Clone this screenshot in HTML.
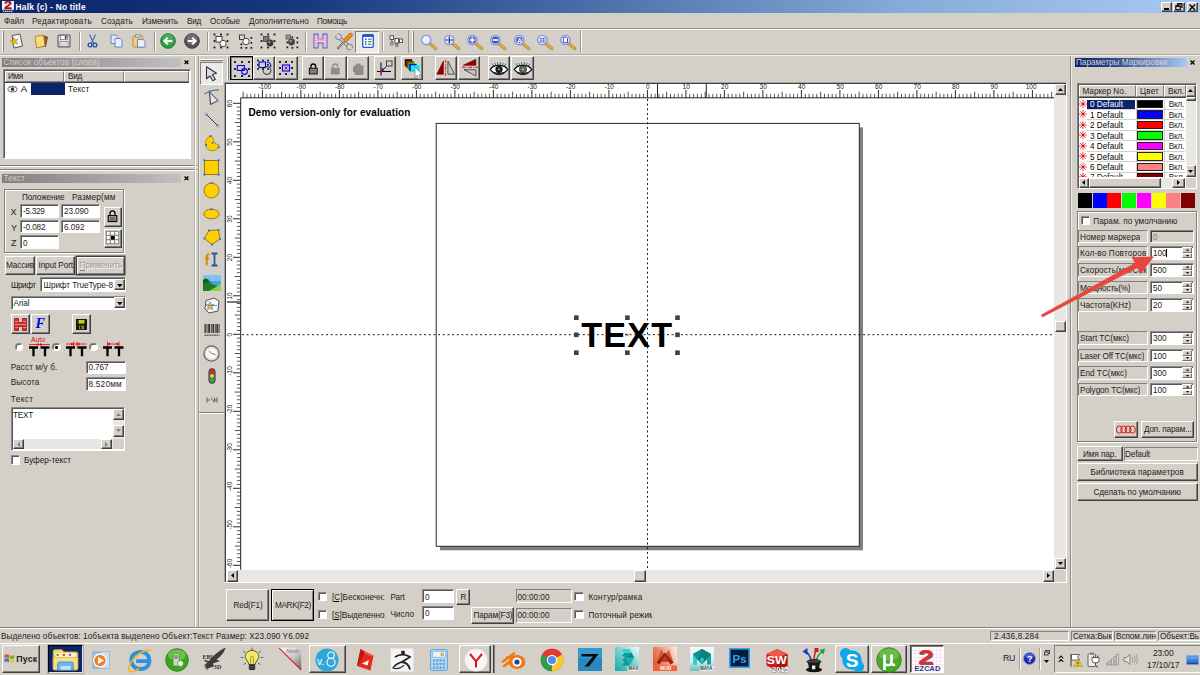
<!DOCTYPE html>
<html><head><meta charset="utf-8"><title>Halk (c) - No title</title>
<style>
*{box-sizing:border-box;margin:0;padding:0}
html,body{width:1200px;height:675px;overflow:hidden;background:#d4d0c8}
body{position:relative;font-family:"Liberation Sans","DejaVu Sans",sans-serif;font-size:8.2px;color:#1c1c1c;line-height:1}
.a{position:absolute}
.t{position:absolute;white-space:nowrap;line-height:1}
.btn{position:absolute;background:#d4d0c8;border:1px solid;border-color:#fff #404040 #404040 #fff;box-shadow:inset -1px -1px 0 #808080}
.btnp{position:absolute;background:#d4d0c8;border:1px solid #000;box-shadow:inset 1px 1px 0 #fff, inset -1px -1px 0 #808080}
.sunk{position:absolute;background:#fff;border:1px solid;border-color:#8a8a8a #fff #fff #8a8a8a;box-shadow:inset 1px 1px 0 #585858}
.sunkg{position:absolute;background:#d4d0c8;border:1px solid;border-color:#808080 #fff #fff #808080}
.hl{position:absolute;height:2px;border-top:1px solid #808080;border-bottom:1px solid #fff}
.vl{position:absolute;width:2px;border-left:1px solid #808080;border-right:1px solid #fff}
.chk{position:absolute;background:#fff;border:1px solid;border-color:#8a8a8a #fff #fff #8a8a8a;box-shadow:inset 1px 1px 0 #585858}
.grp{position:absolute;border:1px solid #808080;box-shadow:1px 1px 0 #fff, inset 1px 1px 0 #fff}
.dither{background-color:#e9e7e3}
.tbtn{position:absolute;background:#d4d0c8;border:1px solid;border-color:#fff #404040 #404040 #fff;box-shadow:inset -1px -1px 0 #808080}
svg{position:absolute;overflow:visible}
</style></head><body>

<div class="a" style="left:0;top:0;width:1200px;height:13px;background:linear-gradient(90deg,#0a246a 0%,#17387e 25%,#4d70ab 50%,#86abd8 75%,#a6caf0 100%)"></div>
<svg style="left:1.5px;top:0.5px" width="12" height="12" viewBox="0 0 12 12"><rect width="12" height="12" fill="#f4f4f4"/><text x="2" y="8.3" font-size="10" font-weight="bold" fill="#c81428" stroke="#7a0a14" stroke-width=".3" font-family="Liberation Sans,sans-serif" textLength="8" lengthAdjust="spacingAndGlyphs">2</text><rect x="0" y="8.8" width="12" height="3.2" fill="#2a2f6a"/><path d="M1 10.4H11" stroke="#c8c8e0" stroke-width="1.2" stroke-dasharray="1.4 .6"/></svg>
<div class="t" style="left:15.5px;top:2px;font-size:8.4px;line-height:10px;letter-spacing:0.222px;color:#fff;font-weight:bold;">Halk (c) - No title</div>
<div class="btn" style="left:1161.0px;top:1.7px;width:11.0px;height:10.0px;"></div>
<div class="btn" style="left:1173.0px;top:1.7px;width:11.5px;height:10.0px;"></div>
<div class="btn" style="left:1186.7px;top:1.7px;width:11.3px;height:10.0px;"></div>
<div class="a" style="left:1164px;top:8px;width:5px;height:1.5px;background:#000"></div>
<svg style="left:1175px;top:3px" width="8" height="8" viewBox="0 0 8 8"><rect x="2.5" y="0.8" width="4.5" height="3.5" fill="none" stroke="#000" stroke-width="1"/><rect x="2.5" y="0.3" width="4.5" height="1.2" fill="#000"/><rect x="0.8" y="3" width="4.5" height="3.7" fill="#d4d0c8" stroke="#000" stroke-width="1"/><rect x="0.8" y="2.6" width="4.5" height="1.2" fill="#000"/></svg>
<svg style="left:1189px;top:3.5px" width="7" height="7" viewBox="0 0 7 7"><path d="M0.5 0.5L6 6M6 0.5L0.5 6" stroke="#000" stroke-width="1.3"/></svg>
<div class="t" style="left:4.0px;top:17px;font-size:8.2px;line-height:9px;letter-spacing:-0.040px;">Файл</div>
<div class="t" style="left:32.0px;top:17px;font-size:8.2px;line-height:9px;letter-spacing:0.258px;">Редактировать</div>
<div class="t" style="left:101.0px;top:17px;font-size:8.2px;line-height:9px;letter-spacing:0.119px;">Создать</div>
<div class="t" style="left:142.0px;top:17px;font-size:8.2px;line-height:9px;letter-spacing:-0.124px;">Изменить</div>
<div class="t" style="left:187.0px;top:17px;font-size:8.2px;line-height:9px;letter-spacing:-0.278px;">Вид</div>
<div class="t" style="left:210.0px;top:17px;font-size:8.2px;line-height:9px;letter-spacing:-0.047px;">Особые</div>
<div class="t" style="left:249.0px;top:17px;font-size:8.2px;line-height:9px;letter-spacing:0.075px;">Дополнительно</div>
<div class="t" style="left:317.0px;top:17px;font-size:8.2px;line-height:9px;letter-spacing:-0.279px;">Помощь</div>
<div class="hl" style="left:0;top:27.8px;width:1200px;border-top-color:#9c9890"></div>
<div class="a" style="left:0;top:55.3px;width:1200px;height:1px;background:#f4f2ee"></div>
<div class="a" style="left:0;top:54.3px;width:1200px;height:1px;background:#b0aca4"></div>
<div class="a" style="left:2px;top:31px;width:2px;height:21px;border-left:1px solid #fff;border-right:1px solid #808080"></div>
<div class="a" style="left:412px;top:31px;width:2px;height:21px;border-left:1px solid #fff;border-right:1px solid #808080"></div>
<div class="a" style="left:408px;top:30px;width:1px;height:23px;background:#9a968e"></div>
<div class="a" style="left:580px;top:30px;width:1px;height:23px;background:#9a968e"></div>
<div class="a" style="left:581px;top:30px;width:1px;height:23px;background:#fff"></div>
<div class="vl" style="left:78.5px;top:32px;height:19px;border-left-color:#9a968e"></div>
<div class="vl" style="left:154px;top:32px;height:19px;border-left-color:#9a968e"></div>
<div class="vl" style="left:206.5px;top:32px;height:19px;border-left-color:#9a968e"></div>
<div class="vl" style="left:305px;top:32px;height:19px;border-left-color:#9a968e"></div>
<div class="vl" style="left:381.5px;top:32px;height:19px;border-left-color:#9a968e"></div>
<svg style="left:9.2px;top:33.3px" width="15" height="16" viewBox="0 0 15 16"><path d="M3 2.5L11 1L13.5 13L5 15Z" fill="#f4f4f4" stroke="#555" stroke-width="1"/><path d="M4.5 4.5l1.6 2.4 2.8-.6-1.8 2.2 1.4 2.5-2.7-1-2 2.1.2-2.9L1.4 8l2.8-.7z" fill="#f5c400" stroke="#a07000" stroke-width=".5"/></svg>
<svg style="left:32.8px;top:33.3px" width="16" height="16" viewBox="0 0 16 16"><path d="M9 2.5L14.5 4L12.5 13.5L7 13Z" fill="#a0522d" stroke="#5a2a10" stroke-width=".7"/><path d="M2 3.5L10.5 2L12 13L3.5 15Z" fill="#f7dc7a" stroke="#a88420" stroke-width=".9"/></svg>
<svg style="left:57.0px;top:34.3px" width="14" height="14" viewBox="0 0 14 14"><rect x="1" y="1" width="12" height="12" rx="1" fill="#e4e4e4" stroke="#555" stroke-width="1.1"/><rect x="3.5" y="1.5" width="7" height="4" fill="#fff" stroke="#666" stroke-width=".7"/><rect x="7.8" y="2" width="1.8" height="2.8" fill="#444"/><rect x="3" y="7.5" width="8" height="5" fill="#fafafa" stroke="#666" stroke-width=".7"/><path d="M4 9.3h6M4 11h6" stroke="#999" stroke-width=".6"/></svg>
<svg style="left:87.3px;top:34.3px" width="11" height="14" viewBox="0 0 11 14"><path d="M2.5 0.5L6.5 9M8.5 0.5L4.5 9" stroke="#3a6fc4" stroke-width="1.2" fill="none"/><circle cx="3" cy="11" r="1.9" fill="none" stroke="#1b4fb0" stroke-width="1.3"/><circle cx="8" cy="11" r="1.9" fill="none" stroke="#1b4fb0" stroke-width="1.3"/></svg>
<svg style="left:109.5px;top:34.3px" width="13" height="14" viewBox="0 0 13 14"><path d="M1 1H6L8 3V9.5H1Z" fill="#dfe9fb" stroke="#5b7fc7" stroke-width=".9"/><path d="M5 4.5H10L12 6.5V13H5Z" fill="#e8f0ff" stroke="#5b7fc7" stroke-width=".9"/></svg>
<svg style="left:132.3px;top:34.3px" width="14" height="14" viewBox="0 0 14 14"><rect x="1" y="2" width="10" height="11" rx="1" fill="#f3d27a" stroke="#b08a2a" stroke-width=".9"/><rect x="3.5" y="0.8" width="5" height="2.6" fill="#cfcfcf" stroke="#777" stroke-width=".6"/><path d="M5.5 5.5H11L13 7.5V13.2H5.5Z" fill="#e8f0ff" stroke="#5b7fc7" stroke-width=".9"/></svg>
<svg style="left:160.3px;top:33.3px" width="16" height="16" viewBox="0 0 16 16"><circle cx="8" cy="8" r="7.3" fill="#2f9e44" stroke="#1f6e30" stroke-width="1"/><circle cx="8" cy="6" r="5.5" fill="#5fc46f" opacity=".45"/><path d="M12.3 8H5M7.8 4.8L4.4 8l3.4 3.2" stroke="#fff" stroke-width="2" fill="none"/></svg>
<svg style="left:183.7px;top:33.3px" width="16" height="16" viewBox="0 0 16 16"><circle cx="8" cy="8" r="7.3" fill="#555" stroke="#333" stroke-width="1"/><circle cx="8" cy="6" r="5.5" fill="#999" opacity=".4"/><path d="M3.7 8H11M8.2 4.8L11.6 8 8.2 11.2" stroke="#fff" stroke-width="2" fill="none"/></svg>
<svg style="left:213.0px;top:33.3px" width="16" height="16" viewBox="-0.5 -0.5 16 16"><rect x="0.09999999999999998" y="0.09999999999999998" width="1.8" height="1.8" fill="#111"/><rect x="0.09999999999999998" y="6.6" width="1.8" height="1.8" fill="#111"/><rect x="0.09999999999999998" y="13.1" width="1.8" height="1.8" fill="#111"/><rect x="6.6" y="0.09999999999999998" width="1.8" height="1.8" fill="#111"/><rect x="6.6" y="13.1" width="1.8" height="1.8" fill="#111"/><rect x="13.1" y="0.09999999999999998" width="1.8" height="1.8" fill="#111"/><rect x="13.1" y="6.6" width="1.8" height="1.8" fill="#111"/><rect x="13.1" y="13.1" width="1.8" height="1.8" fill="#111"/><rect x="2.5" y="3" width="6" height="5.5" fill="#fff" stroke="#333" stroke-width=".9"/><circle cx="9.5" cy="10" r="3.2" fill="#fff" stroke="#333" stroke-width=".9"/></svg>
<svg style="left:236.5px;top:33.3px" width="16" height="16" viewBox="-0.5 -0.5 16 16"><rect x="2" y="1.5" width="5" height="4.5" fill="#d8d8d8" stroke="#333" stroke-width=".9"/><circle cx="8.5" cy="8" r="3.2" fill="#fff" stroke="#333" stroke-width=".9"/><rect x="3" y="10" width="1.7" height="1.7" fill="#111"/><rect x="3" y="13.5" width="1.7" height="1.7" fill="#111"/><rect x="8" y="13.5" width="1.7" height="1.7" fill="#111"/><rect x="13" y="13.5" width="1.7" height="1.7" fill="#111"/><rect x="13" y="8.5" width="1.7" height="1.7" fill="#111"/><rect x="13" y="3.5" width="1.7" height="1.7" fill="#111"/></svg>
<svg style="left:259.5px;top:33.3px" width="16" height="16" viewBox="-0.5 -0.5 16 16"><rect x="0.09999999999999998" y="0.09999999999999998" width="1.8" height="1.8" fill="#111"/><rect x="0.09999999999999998" y="6.6" width="1.8" height="1.8" fill="#111"/><rect x="0.09999999999999998" y="13.1" width="1.8" height="1.8" fill="#111"/><rect x="6.6" y="0.09999999999999998" width="1.8" height="1.8" fill="#111"/><rect x="6.6" y="13.1" width="1.8" height="1.8" fill="#111"/><rect x="13.1" y="0.09999999999999998" width="1.8" height="1.8" fill="#111"/><rect x="13.1" y="6.6" width="1.8" height="1.8" fill="#111"/><rect x="13.1" y="13.1" width="1.8" height="1.8" fill="#111"/><rect x="3" y="3" width="5.5" height="5" fill="#777" stroke="#333" stroke-width=".7"/><circle cx="9.5" cy="9.5" r="3.4" fill="#3a3a3a"/><circle cx="8.7" cy="8.6" r="1.3" fill="#888"/></svg>
<svg style="left:283.0px;top:33.3px" width="16" height="16" viewBox="-0.5 -0.5 16 16"><rect x="2.5" y="1.5" width="4.5" height="4" fill="#999" stroke="#444" stroke-width=".7"/><circle cx="8" cy="8.5" r="3.4" fill="#444"/><circle cx="7.2" cy="7.6" r="1.3" fill="#999"/><rect x="3" y="8" width="1.7" height="1.7" fill="#111"/><rect x="3" y="13" width="1.7" height="1.7" fill="#111"/><rect x="8" y="13.5" width="1.7" height="1.7" fill="#111"/><rect x="13" y="13" width="1.7" height="1.7" fill="#111"/><rect x="13" y="8" width="1.7" height="1.7" fill="#111"/><rect x="13" y="3.5" width="1.7" height="1.7" fill="#111"/><rect x="8" y="3" width="1.7" height="1.7" fill="#111"/></svg>
<svg style="left:312.8px;top:33.3px" width="15" height="16" viewBox="0 0 15 16"><path d="M1 1H5V6H10V1H14V15H10V10H5V15H1Z" fill="#f7a8c0" stroke="#5a5ad8" stroke-width="1.1"/><path d="M1 3.5H5M1 6H14M1 8.5H14M1 11H5M1 13.3H5M10 3.5H14M10 11H14M10 13.3H14" stroke="#fff" stroke-width=".7" opacity=".7"/></svg>
<svg style="left:334.9px;top:32.5px" width="18" height="17" viewBox="0 0 18 17"><path d="M4 4.2L14.3 13.8" stroke="#5a5a5a" stroke-width="3.4"/><path d="M4 4.2L14.3 13.8" stroke="#d6d6d6" stroke-width="2.2"/><circle cx="3.6" cy="3.8" r="2.9" fill="#d6d6d6" stroke="#5a5a5a" stroke-width=".7"/><path d="M3.2 3.4L0 2.2L2 0Z" fill="#d4d0c8"/><circle cx="14.6" cy="14" r="2.9" fill="#d6d6d6" stroke="#5a5a5a" stroke-width=".7"/><path d="M15 14.4L18 15.8L16.2 17.6Z" fill="#d4d0c8"/><path d="M10.2 7.6L3 15.3" stroke="#5a5a5a" stroke-width="2.1" stroke-linecap="round"/><path d="M10.2 7.6L3 15.3" stroke="#c8c8c8" stroke-width="1" stroke-linecap="round"/><path d="M15.6 2L10.8 7" stroke="#b85a08" stroke-width="4.2" stroke-linecap="round"/><path d="M15.6 2L10.8 7" stroke="#f58a1e" stroke-width="3.1" stroke-linecap="round"/></svg>
<div class="a" style="left:355.0px;top:31.0px;width:24.0px;height:21.6px;background:#eceae6;border:1px solid;border-color:#808080 #fff #fff #808080"></div>
<svg style="left:361.5px;top:34.3px" width="12" height="14" viewBox="0 0 12 14"><rect x="0.7" y="0.7" width="10.6" height="12.6" rx="1" fill="#fff" stroke="#1c5fd0" stroke-width="1.3"/><rect x="0.7" y="0.7" width="10.6" height="2.3" fill="#1c5fd0"/><path d="M3 5.2h1.5M3 7.7h1.5M3 10.2h1.5" stroke="#1c5fd0" stroke-width="1.4"/><path d="M6 5.2h3.5M6 7.7h3.5M6 10.2h3.5" stroke="#555" stroke-width="1"/></svg>
<svg style="left:389.0px;top:35.3px" width="14" height="12" viewBox="0 0 14 12"><rect x="1" y="0.8" width="3.6" height="3.6" fill="#fff" stroke="#333" stroke-width=".8"/><rect x="6" y="3.5" width="3.4" height="4.5" fill="#fff" stroke="#333" stroke-width=".8"/><rect x="10.5" y="4" width="3" height="3.6" fill="#fff" stroke="#333" stroke-width=".8"/><circle cx="2.8" cy="8.6" r="1.5" fill="#ccc" stroke="#333" stroke-width=".7"/><circle cx="7.8" cy="10.3" r="1.3" fill="#ccc" stroke="#333" stroke-width=".7"/><path d="M2.8 4.4V7M7.8 8V9" stroke="#333" stroke-width=".7"/></svg>
<svg style="left:419.5px;top:34.0px" width="18" height="16" viewBox="0 0 18 16"><path d="M9.5 9.3L15.8 14.6" stroke="#9a7424" stroke-width="3" stroke-linecap="round"/><path d="M9.5 9.3L15.8 14.6" stroke="#e2ac42" stroke-width="2.1" stroke-linecap="round"/><circle cx="6.3" cy="6" r="4.7" fill="#dce8fb" stroke="#7d86d8" stroke-width="1.1"/><circle cx="5.5" cy="5" r="2.5" fill="#fff" opacity=".6"/></svg>
<svg style="left:443.0px;top:34.0px" width="18" height="16" viewBox="0 0 18 16"><path d="M9.5 9.3L15.8 14.6" stroke="#9a7424" stroke-width="3" stroke-linecap="round"/><path d="M9.5 9.3L15.8 14.6" stroke="#e2ac42" stroke-width="2.1" stroke-linecap="round"/><circle cx="6.3" cy="6" r="4.7" fill="#dce8fb" stroke="#7d86d8" stroke-width="1.1"/><circle cx="5.5" cy="5" r="2.5" fill="#fff" opacity=".6"/><path d="M6.3 3v6M3.3 6h6" stroke="#2a3a9a" stroke-width="1.2"/><path d="M6.3 2l1 1.4h-2zM6.3 10l1-1.4h-2zM2.3 6l1.4-1v2zM10.3 6l-1.4-1v2z" fill="#2a3a9a"/></svg>
<svg style="left:466.3px;top:34.0px" width="18" height="16" viewBox="0 0 18 16"><path d="M9.5 9.3L15.8 14.6" stroke="#9a7424" stroke-width="3" stroke-linecap="round"/><path d="M9.5 9.3L15.8 14.6" stroke="#e2ac42" stroke-width="2.1" stroke-linecap="round"/><circle cx="6.3" cy="6" r="4.7" fill="#dce8fb" stroke="#7d86d8" stroke-width="1.1"/><circle cx="5.5" cy="5" r="2.5" fill="#fff" opacity=".6"/><circle cx="6.3" cy="6" r="3.5" fill="#3b55c8"/><path d="M6.3 3.4v5.2M3.7 6h5.2" stroke="#fff" stroke-width="1.7"/></svg>
<svg style="left:489.3px;top:34.0px" width="18" height="16" viewBox="0 0 18 16"><path d="M9.5 9.3L15.8 14.6" stroke="#9a7424" stroke-width="3" stroke-linecap="round"/><path d="M9.5 9.3L15.8 14.6" stroke="#e2ac42" stroke-width="2.1" stroke-linecap="round"/><circle cx="6.3" cy="6" r="4.7" fill="#dce8fb" stroke="#7d86d8" stroke-width="1.1"/><circle cx="5.5" cy="5" r="2.5" fill="#fff" opacity=".6"/><circle cx="6.3" cy="6" r="3.5" fill="#3b55c8"/><path d="M3.7 6h5.2" stroke="#fff" stroke-width="1.7"/></svg>
<svg style="left:512.5px;top:34.0px" width="18" height="16" viewBox="0 0 18 16"><path d="M9.5 9.3L15.8 14.6" stroke="#9a7424" stroke-width="3" stroke-linecap="round"/><path d="M9.5 9.3L15.8 14.6" stroke="#e2ac42" stroke-width="2.1" stroke-linecap="round"/><circle cx="6.3" cy="6" r="4.7" fill="#dce8fb" stroke="#7d86d8" stroke-width="1.1"/><circle cx="5.5" cy="5" r="2.5" fill="#fff" opacity=".6"/><circle cx="6.3" cy="6" r="3.2" fill="#3b55c8"/><text x="3.9" y="8.5" font-size="7" font-weight="bold" fill="#fff" font-family="Liberation Sans,sans-serif">A</text></svg>
<svg style="left:535.7px;top:34.0px" width="18" height="16" viewBox="0 0 18 16"><path d="M9.5 9.3L15.8 14.6" stroke="#9a7424" stroke-width="3" stroke-linecap="round"/><path d="M9.5 9.3L15.8 14.6" stroke="#e2ac42" stroke-width="2.1" stroke-linecap="round"/><circle cx="6.3" cy="6" r="4.7" fill="#dce8fb" stroke="#7d86d8" stroke-width="1.1"/><circle cx="5.5" cy="5" r="2.5" fill="#fff" opacity=".6"/><path d="M3.3 4.5h6M3.3 6.2h6M3.3 7.9h6M5 3.3v5.5M7.6 3.3v5.5" stroke="#4a5ab8" stroke-width=".6"/></svg>
<svg style="left:558.7px;top:34.0px" width="18" height="16" viewBox="0 0 18 16"><path d="M9.5 9.3L15.8 14.6" stroke="#9a7424" stroke-width="3" stroke-linecap="round"/><path d="M9.5 9.3L15.8 14.6" stroke="#e2ac42" stroke-width="2.1" stroke-linecap="round"/><circle cx="6.3" cy="6" r="4.7" fill="#dce8fb" stroke="#7d86d8" stroke-width="1.1"/><circle cx="5.5" cy="5" r="2.5" fill="#fff" opacity=".6"/><path d="M4.3 3.2h3l1.2 1.2v4.3h-4.2z" fill="#fff" stroke="#2a3a9a" stroke-width=".9"/></svg>
<div class="a" style="left:2px;top:57.5px;width:179px;height:9.5px;background:linear-gradient(90deg,#808080,#c0c0c0)"></div>
<div class="t" style="left:3.5px;top:58px;font-size:8.2px;line-height:9px;letter-spacing:0.079px;color:#d4d0c8;">Список объектов (слоёв)</div>
<svg style="left:184.3px;top:59.8px" width="5" height="4.6" viewBox="0 0 5 4.6"><path d="M0.6 0.5L4.4 4.1M4.4 0.5L0.6 4.1" stroke="#000" stroke-width="1.35"/></svg>
<div class="sunk" style="left:3.0px;top:69.0px;width:188.0px;height:90.0px;"></div>
<div class="a" style="left:5.0px;top:70.5px;width:59.0px;height:11.5px;background:#d4d0c8;border:1px solid;border-color:#fff #808080 #808080 #fff;box-shadow:0 1px 0 #404040"></div>
<div class="a" style="left:64.0px;top:70.5px;width:60.0px;height:11.5px;background:#d4d0c8;border:1px solid;border-color:#fff #808080 #808080 #fff;box-shadow:0 1px 0 #404040"></div>
<div class="a" style="left:124.0px;top:70.5px;width:65.0px;height:11.5px;background:#d4d0c8;border:1px solid;border-color:#fff #808080 #808080 #fff;box-shadow:0 1px 0 #404040"></div>
<div class="t" style="left:8.0px;top:72px;font-size:8.2px;line-height:9px;letter-spacing:-0.324px;">Имя</div>
<div class="t" style="left:68.0px;top:72px;font-size:8.2px;line-height:9px;letter-spacing:-0.278px;">Вид</div>
<svg style="left:6.5px;top:85px" width="11" height="8" viewBox="0 0 11 8"><ellipse cx="5.5" cy="4.3" rx="4.6" ry="2.6" fill="#fff" stroke="#333" stroke-width="0.8"/><circle cx="5.5" cy="4.3" r="1.7" fill="#333"/><path d="M2 1.5L3 2.5M5.5 0.5V1.8M9 1.5L8 2.5" stroke="#333" stroke-width="0.6"/></svg>
<div class="t" style="left:20.8px;top:83px;font-size:9.6px;line-height:11px;color:#000;">A</div>
<div class="a" style="left:31.0px;top:82.5px;width:33.5px;height:12.0px;background:#0a246a"></div>
<div class="t" style="left:68.0px;top:85px;font-size:8.2px;line-height:9px;letter-spacing:0.171px;">Текст</div>
<div class="a" style="left:0;top:165px;width:197px;height:1px;background:#808080"></div>
<div class="a" style="left:0;top:166px;width:197px;height:1px;background:#fff"></div>
<div class="a" style="left:0;top:169px;width:197px;height:1px;background:#808080"></div>
<div class="a" style="left:0;top:170px;width:197px;height:1px;background:#fff"></div>
<div class="a" style="left:195px;top:56px;width:1px;height:571px;background:#fff"></div>
<div class="a" style="left:194px;top:56px;width:1px;height:571px;background:#bcb8b0"></div>
<div class="a" style="left:2px;top:173.5px;width:179px;height:9.5px;background:linear-gradient(90deg,#808080,#c0c0c0)"></div>
<div class="t" style="left:3.5px;top:174px;font-size:8.2px;line-height:9px;letter-spacing:0.171px;color:#d4d0c8;">Текст</div>
<svg style="left:184.3px;top:175.8px" width="5" height="4.6" viewBox="0 0 5 4.6"><path d="M0.6 0.5L4.4 4.1M4.4 0.5L0.6 4.1" stroke="#000" stroke-width="1.35"/></svg>
<div class="grp" style="left:4.3px;top:188.5px;width:119.7px;height:64.0px;"></div>
<div class="t" style="left:22.0px;top:193px;font-size:8.2px;line-height:9px;letter-spacing:-0.093px;">Положение</div>
<div class="t" style="left:72.0px;top:193px;font-size:8.2px;line-height:9px;letter-spacing:0.146px;">Размер(мм</div>
<div class="t" style="left:10.5px;top:207px;font-size:9px;line-height:10px;">X</div>
<div class="t" style="left:11.0px;top:223px;font-size:9px;line-height:10px;">Y</div>
<div class="t" style="left:11.0px;top:238px;font-size:9px;line-height:10px;">Z</div>
<div class="sunk" style="left:20.0px;top:204.0px;width:39.0px;height:13.5px;"></div>
<div class="t" style="left:23.0px;top:207px;font-size:8.2px;line-height:9px;letter-spacing:-0.292px;">-5.329</div>
<div class="sunk" style="left:61.0px;top:204.0px;width:39.0px;height:13.5px;"></div>
<div class="t" style="left:64.0px;top:207px;font-size:8.2px;line-height:9px;letter-spacing:-0.097px;">23.090</div>
<div class="sunk" style="left:20.0px;top:219.5px;width:39.0px;height:13.5px;"></div>
<div class="t" style="left:23.0px;top:223px;font-size:8.2px;line-height:9px;letter-spacing:-0.125px;">-0.082</div>
<div class="sunk" style="left:61.0px;top:219.5px;width:39.0px;height:13.5px;"></div>
<div class="t" style="left:64.0px;top:223px;font-size:8.2px;line-height:9px;letter-spacing:-0.004px;">6.092</div>
<div class="sunk" style="left:20.0px;top:235.3px;width:39.0px;height:13.7px;"></div>
<div class="t" style="left:23.0px;top:239px;font-size:8.2px;line-height:9px;">0</div>
<div class="btn" style="left:104.0px;top:207.0px;width:17.5px;height:19.5px;"></div>
<svg style="left:106.8px;top:209.5px" width="11" height="13" viewBox="0 0 11 13"><path d="M3 6V3.3a2.5 2.5 0 0 1 5 0V6" fill="none" stroke="#000" stroke-width="1.3"/><rect x="1.2" y="5.6" width="8.6" height="6" fill="#b0b0b0" stroke="#000" stroke-width="1.1"/><path d="M2.5 8h6M2.5 10h6" stroke="#000" stroke-width="0.7"/></svg>
<div class="btn" style="left:104.0px;top:229.0px;width:17.5px;height:18.5px;"></div>
<svg style="left:106px;top:231px" width="13" height="13" viewBox="0 0 13 13"><rect x="0" y="0" width="13" height="13" fill="#fff"/><path d="M4.3 0V13M8.6 0V13M0 4.3H13M0 8.6H13" stroke="#909090" stroke-width="1.2"/><rect x="0.3" y="0.3" width="12.4" height="12.4" fill="none" stroke="#808080" stroke-width="1"/><rect x="5" y="5" width="3.6" height="3.6" fill="#000"/></svg>
<div class="btn" style="left:4.5px;top:256.0px;width:30.0px;height:18.5px;"></div>
<div class="t" style="left:6.0px;top:261px;font-size:8.2px;line-height:9px;letter-spacing:-0.103px;overflow:hidden;width:28px;">Массив</div>
<div class="btn" style="left:36.0px;top:256.0px;width:39.0px;height:18.5px;"></div>
<div class="t" style="left:38.5px;top:261px;font-size:8.2px;line-height:9px;letter-spacing:-0.106px;">Input Port</div>
<div class="btnp" style="left:75.8px;top:256.0px;width:49.2px;height:18.8px;border:1px solid #404040;box-shadow:inset 1px 1px 0 #fff, inset -1px -1px 0 #808080, 0 0 0 0.5px #404040"></div>
<div class="t" style="left:79.5px;top:261px;font-size:8.2px;line-height:9px;letter-spacing:0.070px;color:#9a968e;text-shadow:0.6px 0.6px 0 #fff;">Применить</div>
<div class="a" style="left:80px;top:270px;width:5px;height:0.7px;background:#808080"></div>
<div class="t" style="left:11.0px;top:281px;font-size:8.2px;line-height:9px;letter-spacing:-0.496px;">Шрифт</div>
<div class="sunk" style="left:40.0px;top:277.4px;width:85.9px;height:14.2px;"></div>
<div class="t" style="left:43.5px;top:281px;font-size:8.2px;line-height:9px;letter-spacing:-0.086px;overflow:hidden;width:70px;">Шрифт TrueType-8</div>
<div class="btn" style="left:114.2px;top:279.2px;width:10.6px;height:10.7px;"><svg style="left:2.3px;top:3.6px" width="5.6" height="3.2" viewBox="0 0 5.6 3.2"><path d="M0 0H5.6L2.8 3.2Z" fill="#000"/></svg></div>
<div class="sunk" style="left:10.6px;top:295.6px;width:115.3px;height:14.0px;"></div>
<div class="t" style="left:13.5px;top:299px;font-size:8.2px;line-height:9px;letter-spacing:-0.081px;">Arial</div>
<div class="btn" style="left:114.2px;top:297.4px;width:10.6px;height:10.6px;"><svg style="left:2.3px;top:3.6px" width="5.6" height="3.2" viewBox="0 0 5.6 3.2"><path d="M0 0H5.6L2.8 3.2Z" fill="#000"/></svg></div>
<div class="btn" style="left:10.5px;top:313.5px;width:19.0px;height:20.5px;"></div>
<svg style="left:13.5px;top:317.5px" width="13" height="13" viewBox="0 0 13 13"><path d="M0.5 0.5H4.5V4.5H8.5V0.5H12.5V12.5H8.5V8.5H4.5V12.5H0.5Z" fill="#e03030" stroke="#801010" stroke-width="0.8"/><path d="M0.5 3.5H4.5M0.5 6.5H12.5M0.5 9.5H4.5M8.5 3.5H12.5M8.5 9.5H12.5" stroke="#fff" stroke-width="0.6" opacity=".6"/></svg>
<div class="btn" style="left:30.8px;top:313.5px;width:19.0px;height:20.5px;"></div>
<div class="t" style="left:35.5px;top:316px;font-size:14px;line-height:16px;color:#0000e0;font-weight:bold;font-style:italic;font-family:'Liberation Serif',serif;">F</div>
<div class="btn" style="left:71.5px;top:313.5px;width:19.2px;height:20.5px;"></div>
<svg style="left:75.5px;top:318.5px" width="11" height="11" viewBox="0 0 11 11"><rect x="0.5" y="0.5" width="10" height="10" fill="#1a1a00" stroke="#000" stroke-width="0.8"/><rect x="2.5" y="1" width="6" height="3.6" fill="#c8c832"/><rect x="3" y="6.6" width="5" height="3.6" fill="#8a8a20"/><rect x="4" y="7.3" width="1.6" height="2.4" fill="#111"/></svg>
<div class="a" style="left:15.0px;top:343.1px;width:8.4px;height:8.4px;border-radius:50%;background:#fff;border:1px solid;border-color:#808080 #fff #fff #808080;box-shadow:inset 0.7px 0.7px 0 #404040"></div>
<div class="a" style="left:52.3px;top:343.1px;width:8.4px;height:8.4px;border-radius:50%;background:#fff;border:1px solid;border-color:#808080 #fff #fff #808080;box-shadow:inset 0.7px 0.7px 0 #404040"></div>
<div class="a" style="left:55.2px;top:346.0px;width:2.6px;height:2.6px;border-radius:50%;background:#000"></div>
<div class="a" style="left:89.3px;top:343.1px;width:8.4px;height:8.4px;border-radius:50%;background:#fff;border:1px solid;border-color:#808080 #fff #fff #808080;box-shadow:inset 0.7px 0.7px 0 #404040"></div>
<svg style="left:27.8px;top:338px" width="23" height="19" viewBox="0 0 23 19"><path d="M1 9.5H10M5.5 9.5V18.2M12.5 9.5H21.5M17 9.5V18.2" stroke="#000" stroke-width="2.3" fill="none"/><path d="M1 6.5H22" stroke="#e00" stroke-width="0.8"/><path d="M8 6.5l2.5-1.5v3zM14.5 6.5l-2.5-1.5v3z" fill="#e00"/><text x="3" y="4.4" font-size="6.8" fill="#e00" font-family="Liberation Sans,sans-serif">Auto</text></svg>
<svg style="left:64.8px;top:338px" width="23" height="19" viewBox="0 0 23 19"><path d="M1 9.5H10M5.5 9.5V18.2M12.5 9.5H21.5M17 9.5V18.2" stroke="#000" stroke-width="2.3" fill="none"/><path d="M1 6H21.5" stroke="#e00" stroke-width="0.8"/><path d="M8.5 3.5V8.5M12 3.5V8.5" stroke="#e00" stroke-width="0.8"/><path d="M8.5 6l-2.5-1.5v3zM12 6l2.5-1.5v3z" fill="#e00"/></svg>
<svg style="left:102px;top:338px" width="23" height="19" viewBox="0 0 23 19"><path d="M1 9.5H10M5.5 9.5V18.2M12.5 9.5H21.5M17 9.5V18.2" stroke="#000" stroke-width="2.3" fill="none"/><path d="M5.5 6H17" stroke="#e00" stroke-width="0.8"/><path d="M5.5 3.5V8.5M17 3.5V8.5" stroke="#e00" stroke-width="0.8"/><path d="M5.5 6l2.5-1.5v3zM17 6l-2.5-1.5v3z" fill="#e00"/></svg>
<div class="t" style="left:10.7px;top:363px;font-size:8.2px;line-height:9px;letter-spacing:0.128px;">Расст м/у б.</div>
<div class="sunk" style="left:86.0px;top:360.7px;width:39.5px;height:13.5px;"></div>
<div class="t" style="left:88.5px;top:363px;font-size:8.2px;line-height:9px;letter-spacing:-0.104px;">0.767</div>
<div class="t" style="left:10.7px;top:378px;font-size:8.2px;line-height:9px;letter-spacing:0.107px;">Высота</div>
<div class="sunk" style="left:86.0px;top:377.0px;width:39.5px;height:14.0px;"></div>
<div class="t" style="left:88.5px;top:380px;font-size:8.2px;line-height:9px;letter-spacing:0.244px;">8.520мм</div>
<div class="t" style="left:10.7px;top:395px;font-size:8.2px;line-height:9px;letter-spacing:0.431px;">Текст</div>
<div class="sunk" style="left:10.7px;top:406.5px;width:114.3px;height:44.7px;"></div>
<div class="t" style="left:13.0px;top:411px;font-size:8.2px;line-height:9px;letter-spacing:-0.239px;">TEXT</div>
<div class="a dither" style="left:112.5px;top:408.5px;width:11px;height:30px"></div>
<div class="a dither" style="left:12.7px;top:438.7px;width:100px;height:10.8px"></div>
<div class="a" style="left:112.5px;top:438.7px;width:11px;height:10.8px;background:#d4d0c8"></div>
<div class="btn" style="left:112.5px;top:408.5px;width:11.0px;height:11.5px;"><svg style="left:2.0px;top:3.2px" width="5" height="3" viewBox="0 0 5 3"><path d="M0 3L2.5 0L5 3Z" fill="#808080"/></svg></div>
<div class="btn" style="left:112.5px;top:425.0px;width:11.0px;height:11.5px;"><svg style="left:2.0px;top:3.2px" width="5" height="3" viewBox="0 0 5 3"><path d="M0 0H5L2.5 3Z" fill="#808080"/></svg></div>
<div class="btn" style="left:12.7px;top:438.7px;width:11.0px;height:10.8px;"><svg style="left:3.0px;top:1.9px" width="3" height="5" viewBox="0 0 3 5"><path d="M3 0V5L0 2.5Z" fill="#808080"/></svg></div>
<div class="btn" style="left:100.5px;top:438.7px;width:11.5px;height:10.8px;"><svg style="left:3.2px;top:1.9px" width="3" height="5" viewBox="0 0 3 5"><path d="M0 0V5L3 2.5Z" fill="#808080"/></svg></div>
<div class="chk" style="left:10.7px;top:455.0px;width:9.3px;height:9.5px;"></div>
<div class="t" style="left:24.0px;top:456px;font-size:8.2px;line-height:9px;letter-spacing:-0.052px;">Буфер-текст</div>
<div class="a" style="left:197.8px;top:56px;width:1px;height:571px;background:#9c9890"></div>
<div class="a" style="left:198.8px;top:56px;width:1px;height:571px;background:#e8e6e0"></div>
<div class="a" style="left:200px;top:58.5px;width:23px;height:2px;border-top:1px solid #fff;border-bottom:1px solid #808080"></div>
<div class="a" style="left:199px;top:411.5px;width:26px;height:2px;border-top:1px solid #808080;border-bottom:1px solid #fff"></div>
<div class="a" style="left:200.2px;top:62.4px;width:23.1px;height:22.4px;background:#eceae6;border:1px solid;border-color:#808080 #fff #fff #808080"></div>
<svg style="left:205.3px;top:65.7px" width="13" height="16" viewBox="0 0 13 16"><path d="M1.5 0.8L11.5 7.2L7.4 8.6L10.3 13.3L7.8 14.8L5 10L1.5 12.8Z" fill="#d8dce8" stroke="#333" stroke-width="1.1" stroke-linejoin="round"/></svg>
<svg style="left:203.5px;top:88.5px" width="16" height="17" viewBox="0 0 16 17"><path d="M0.5 5C5 2 9 1 15 1" fill="none" stroke="#333" stroke-width=".8"/><path d="M5.5 3L14 11.5L6.5 15.5Z" fill="#dfe3ee" stroke="#333" stroke-width="1"/><rect x="4.4" y="1.6" width="2.4" height="2.4" fill="#3a7ae0"/></svg>
<svg style="left:204.5px;top:113.0px" width="14" height="14" viewBox="0 0 14 14"><path d="M1.5 1.5L12.5 12.5" stroke="#333" stroke-width="1"/><rect x="0.5" y="0.5" width="2" height="2" fill="#3a7ae0"/><rect x="11.5" y="11.5" width="2" height="2" fill="#3a7ae0"/></svg>
<svg style="left:203.5px;top:135.3px" width="16" height="17" viewBox="0 0 16 17"><path d="M6.3 0.8C2.5 3 0.3 8 2.3 12.2C4.5 16.8 12.5 17.2 15.3 11.5C15.5 10 13.5 9.5 12 8.8C10 7.8 9.8 5.5 9.2 3.5C8.8 2 7.5 0.5 6.3 0.8Z" fill="#ffd000" stroke="#a08000" stroke-width=".8"/><rect x="5.5" y="0.2" width="2" height="2" fill="#3a7ae0"/><rect x="13.6" y="11.2" width="2" height="2" fill="#3a7ae0"/><rect x="1" y="9" width="2" height="2" fill="#3a7ae0"/><rect x="7.8" y="7" width="1.8" height="1.8" fill="#3a7ae0"/></svg>
<svg style="left:203.0px;top:158.5px" width="17" height="17" viewBox="0 0 17 17"><rect x="1.5" y="1.5" width="14" height="14" fill="#ffd000" stroke="#907000" stroke-width=".9"/><rect x="0.3" y="0.3" width="2" height="2" fill="#3a7ae0"/><rect x="14.7" y="0.3" width="2" height="2" fill="#3a7ae0"/><rect x="0.3" y="14.7" width="2" height="2" fill="#3a7ae0"/><rect x="14.7" y="14.7" width="2" height="2" fill="#3a7ae0"/></svg>
<svg style="left:203.0px;top:181.8px" width="17" height="17" viewBox="0 0 17 17"><circle cx="8.5" cy="8.5" r="7.5" fill="#ffd000" stroke="#907000" stroke-width=".9"/><rect x="7.5" y="0" width="2" height="2" fill="#3a7ae0"/></svg>
<svg style="left:203.0px;top:207.7px" width="17" height="12" viewBox="0 0 17 12"><ellipse cx="8.5" cy="6" rx="7.7" ry="4.8" fill="#ffd000" stroke="#907000" stroke-width=".9"/><rect x="7.5" y="0.2" width="2" height="2" fill="#3a7ae0"/></svg>
<svg style="left:202.5px;top:228.5px" width="18" height="17" viewBox="0 0 18 17"><path d="M6 1.5L15.5 1L17 10L9 15.5L1.5 9.5Z" fill="#ffd000" stroke="#907000" stroke-width=".9"/><rect x="5" y="0.5" width="2" height="2" fill="#3a7ae0"/><rect x="14.5" y="0" width="2" height="2" fill="#3a7ae0"/><rect x="16" y="9" width="2" height="2" fill="#3a7ae0"/><rect x="8" y="14.5" width="2" height="2" fill="#3a7ae0"/><rect x="0.5" y="8.5" width="2" height="2" fill="#3a7ae0"/></svg>
<svg style="left:204.0px;top:252.2px" width="15" height="15" viewBox="0 0 15 15"><path d="M5.5 2.5C3.5 1.5 2.8 3 2.8 5V13.5M1 6.5H5" fill="none" stroke="#d09000" stroke-width="2"/><path d="M7.5 1.5H13.5M7.5 13.5H13.5M10.5 1.5V13.5" stroke="#1a6090" stroke-width="1.8"/></svg>
<svg style="left:202.5px;top:274.8px" width="18" height="16" viewBox="0 0 18 16"><rect x="0" y="0" width="18" height="16" fill="#4aa0e8"/><rect x="0" y="0" width="18" height="6" fill="#7cc4f4"/><path d="M0 16V7L5 4L9 9L18 12V16Z" fill="#1f7a2a"/><path d="M6 16L18 9V16Z" fill="#8ad04a"/><path d="M0 5L3 3L6 6L0 9Z" fill="#155a20"/></svg>
<svg style="left:203.5px;top:297.4px" width="16" height="17" viewBox="0 0 16 17"><path d="M2 3.5L10 1L15 4L14 14L5 16L1 12Z" fill="#f6f6f6" stroke="#444" stroke-width=".9"/><path d="M6 4.5l1.2 3 3.2.2-2.6 2 .9 3.2L6 11.2 3.3 12.9l.9-3.2-2.6-2 3.2-.2z" fill="#f5c400" stroke="#3a6ae0" stroke-width=".5"/><path d="M4 8.5H13" stroke="#3a6ae0" stroke-width=".7"/></svg>
<svg style="left:203.5px;top:323.5px" width="16" height="13" viewBox="0 0 16 13"><rect x="0.5" y="0" width="1.2" height="9" fill="#222"/><rect x="2.6" y="0" width="0.8" height="9" fill="#222"/><rect x="4.3" y="0" width="1.6" height="9" fill="#222"/><rect x="6.8" y="0" width="0.8" height="9" fill="#222"/><rect x="8.5" y="0" width="1.4" height="9" fill="#222"/><rect x="10.8" y="0" width="0.8" height="9" fill="#222"/><rect x="12.4" y="0" width="1.4" height="9" fill="#222"/><rect x="14.6" y="0" width="0.9" height="9" fill="#222"/><path d="M0.5 11.3H15.5" stroke="#555" stroke-width="1.6" stroke-dasharray="1.6 0.8"/></svg>
<svg style="left:203.0px;top:344.5px" width="17" height="17" viewBox="0 0 17 17"><circle cx="8.5" cy="8.5" r="7.6" fill="#e8e8e8" stroke="#666" stroke-width="1.3"/><circle cx="8.5" cy="8.5" r="5.8" fill="#fafafa" stroke="#bbb" stroke-width=".5"/><path d="M8.5 8.5L6 5.5M8.5 8.5L12.5 9.5" stroke="#a33" stroke-width=".8"/></svg>
<svg style="left:207.5px;top:368.0px" width="8" height="16" viewBox="0 0 8 16"><rect x="0.8" y="0.5" width="6.4" height="15" rx="3.2" fill="#5a5a5a" stroke="#333" stroke-width=".6"/><circle cx="4" cy="3.7" r="2.1" fill="#e02020"/><circle cx="4" cy="8" r="2.1" fill="#f0d020"/><circle cx="4" cy="12.3" r="2.1" fill="#30b030"/></svg>
<svg style="left:205.5px;top:396.8px" width="12" height="6" viewBox="0 0 12 6"><path d="M1 0.5V5.5M1 3H4M4.5 0.8L8.5 5.2M8.5 0.8V5.2M8.5 3H11M11 0.5V5.5" stroke="#555" stroke-width=".9" fill="none"/></svg>
<div class="a" style="left:226.5px;top:57px;width:2px;height:23px;border-left:1px solid #fff;border-right:1px solid #808080"></div>
<div class="a" style="left:230.3px;top:56.2px;width:22.5px;height:24.3px;background:#d4d0c8;border:1.3px solid #000;box-shadow:inset 1px 1px 0 #808080"></div>
<div class="btn" style="left:252.8px;top:56.2px;width:22.4px;height:24.3px;"></div>
<div class="btn" style="left:275.2px;top:56.2px;width:22.4px;height:24.3px;"></div>
<div class="btn" style="left:301.7px;top:56.2px;width:22.3px;height:24.3px;"></div>
<div class="btn" style="left:324.0px;top:56.2px;width:22.5px;height:24.3px;"></div>
<div class="btn" style="left:346.5px;top:56.2px;width:22.5px;height:24.3px;"></div>
<div class="btn" style="left:373.8px;top:56.2px;width:22.7px;height:24.3px;"></div>
<div class="btn" style="left:401.0px;top:56.2px;width:22.3px;height:24.3px;"></div>
<div class="btn" style="left:435.0px;top:56.2px;width:22.3px;height:24.3px;"></div>
<div class="btn" style="left:457.5px;top:56.2px;width:22.5px;height:24.3px;"></div>
<div class="btn" style="left:487.5px;top:56.2px;width:22.3px;height:24.3px;"></div>
<div class="btn" style="left:511.3px;top:56.2px;width:22.4px;height:24.3px;"></div>
<svg style="left:233.1px;top:59.8px" width="18" height="18" viewBox="0 0 18 18"><rect x="1.05" y="1.05" width="1.9" height="1.9" fill="#111"/><rect x="1.05" y="8.05" width="1.9" height="1.9" fill="#111"/><rect x="1.05" y="15.05" width="1.9" height="1.9" fill="#111"/><rect x="8.05" y="1.05" width="1.9" height="1.9" fill="#111"/><rect x="8.05" y="15.05" width="1.9" height="1.9" fill="#111"/><rect x="15.05" y="1.05" width="1.9" height="1.9" fill="#111"/><rect x="15.05" y="8.05" width="1.9" height="1.9" fill="#111"/><rect x="15.05" y="15.05" width="1.9" height="1.9" fill="#111"/><rect x="4.3" y="5.5" width="7" height="5" fill="none" stroke="#0000f0" stroke-width="1.1"/><circle cx="11.5" cy="11.5" r="2.9" fill="none" stroke="#0000f0" stroke-width="1.1"/></svg>
<svg style="left:255.0px;top:59.3px" width="18" height="18" viewBox="0 0 18 18"><rect x="2.15" y="0.65" width="1.7" height="1.7" fill="#111"/><rect x="2.15" y="4.90" width="1.7" height="1.7" fill="#111"/><rect x="2.15" y="9.15" width="1.7" height="1.7" fill="#111"/><rect x="7.15" y="0.65" width="1.7" height="1.7" fill="#111"/><rect x="7.15" y="9.15" width="1.7" height="1.7" fill="#111"/><rect x="12.15" y="0.65" width="1.7" height="1.7" fill="#111"/><rect x="12.15" y="4.90" width="1.7" height="1.7" fill="#111"/><rect x="12.15" y="9.15" width="1.7" height="1.7" fill="#111"/><rect x="4" y="3" width="6.5" height="5.5" fill="#d4d0c8" stroke="#0000f0" stroke-width="1.1"/><circle cx="12" cy="11.5" r="4" fill="none" stroke="#222" stroke-width=".9"/><path d="M12 3.5c2.5-.8 4 1 3.6 3.2" fill="none" stroke="#0000f0" stroke-width="1"/><path d="M14.5 7.5l1.5-1.6 .8 2.2z" fill="#0000f0"/></svg>
<svg style="left:277.4px;top:59.3px" width="18" height="18" viewBox="0 0 18 18"><rect x="2.05" y="2.05" width="1.9" height="1.9" fill="#111"/><rect x="2.05" y="8.05" width="1.9" height="1.9" fill="#111"/><rect x="2.05" y="14.05" width="1.9" height="1.9" fill="#111"/><rect x="8.05" y="2.05" width="1.9" height="1.9" fill="#111"/><rect x="8.05" y="14.05" width="1.9" height="1.9" fill="#111"/><rect x="14.05" y="2.05" width="1.9" height="1.9" fill="#111"/><rect x="14.05" y="8.05" width="1.9" height="1.9" fill="#111"/><rect x="14.05" y="14.05" width="1.9" height="1.9" fill="#111"/><rect x="5.5" y="6" width="7" height="6" fill="#c8c8ff" stroke="#0000f0" stroke-width="1.1"/><path d="M7.6 7.6l2.8 2.8M10.4 7.6l-2.8 2.8" stroke="#e00000" stroke-width="1"/></svg>
<svg style="left:307.6px;top:62.7px" width="10.5" height="12.3" viewBox="0 0 12 14"><path d="M3.3 6V3.8a2.7 2.7 0 0 1 5.4 0V6" fill="none" stroke="#000" stroke-width="1.5"/><rect x="1.5" y="6" width="9" height="6.5" fill="#a8a8a8" stroke="#000" stroke-width="1.1"/><path d="M2.5 8.2h7M2.5 10.3h7" stroke="#000" stroke-width=".6"/></svg>
<svg style="left:330.0px;top:62.7px" width="10.5" height="12.3" viewBox="0 0 12 14"><path d="M3.3 6V3.8a2.7 2.7 0 0 1 5.4 0V4.5" fill="none" stroke="#8c8c8c" stroke-width="1.5"/><rect x="1.5" y="6" width="9" height="6.5" fill="#8c8c8c" stroke="#8c8c8c" stroke-width="1.1"/></svg>
<svg style="left:350.8px;top:61.6px" width="14" height="14" viewBox="0 0 14 14"><path d="M2 5L6 1.5H9.5V3.5H12.5V13H3.5V10H2Z" fill="#8c8c8c"/></svg>
<svg style="left:376.1px;top:59.3px" width="18" height="18" viewBox="0 0 18 18"><path d="M1 12.5H15M5 3.5V16.5" stroke="#000" stroke-width="1"/><rect x="10.5" y="2" width="5.5" height="5" fill="#d4d0c8" stroke="#333" stroke-width=".9"/><path d="M10.5 7.5L6.5 11" stroke="#0000e0" stroke-width="1"/><path d="M5.6 11.8l3-.6-2.2-2.2z" fill="#0000e0"/><path d="M3.5 12.5H6.5M5 11V14" stroke="#c00000" stroke-width="1"/></svg>
<svg style="left:403.4px;top:58.3px" width="18" height="20" viewBox="0 0 18 20"><rect x="1.8" y="1.2" width="7.2" height="7.2" fill="#111"/><rect x="3.3" y="2.8" width="7.2" height="7.2" fill="#e00000"/><rect x="4.8" y="4.4" width="7.2" height="7.2" fill="#00c000"/><rect x="6.3" y="6" width="7.2" height="7.2" fill="#0000e0"/><rect x="7.8" y="7.2" width="8.8" height="6.6" fill="#00f0f0"/><path d="M12 8.7L19 16.5L16 16.8L17.6 20.6L15.8 21.3L14.2 17.6L12 19.6Z" fill="#fff" stroke="#666" stroke-width=".6"/></svg>
<svg style="left:437.1px;top:59.3px" width="18" height="18" viewBox="0 0 18 18"><path d="M6.4 2.1V15.2H-0.2Z" fill="#8b0000" stroke="#500" stroke-width=".6"/><path d="M10.9 2.1V15.2H17.5Z" fill="#c8c8c8" stroke="#333" stroke-width=".8"/><path d="M8.5 0.5V17.8" stroke="#f03030" stroke-width="1.1" stroke-dasharray="3.4 1 1.2 1"/></svg>
<svg style="left:459.8px;top:59.3px" width="18" height="18" viewBox="0 0 18 18"><path d="M15.9 0.3V6.3H3.2Z" fill="#8b0000" stroke="#500" stroke-width=".6"/><path d="M15.9 17V10.7H4Z" fill="#c8c8c8" stroke="#333" stroke-width=".8"/><path d="M2 8.4H18.3" stroke="#f03030" stroke-width="1.1" stroke-dasharray="3.4 1 1.2 1"/></svg>
<svg style="left:489.6px;top:59.8px" width="18" height="17" viewBox="0 0 18 17"><path d="M4.0 6.0L1.5 3.8" stroke="#1f7f8f" stroke-width="1"/><path d="M6.0 5.6L4.5 3.0" stroke="#1f7f8f" stroke-width="1"/><path d="M8.0 5.2L7.5 2.2" stroke="#1f7f8f" stroke-width="1"/><path d="M10.0 5.2L10.5 2.2" stroke="#1f7f8f" stroke-width="1"/><path d="M12.0 5.6L13.5 3.0" stroke="#1f7f8f" stroke-width="1"/><path d="M14.0 6.0L16.5 3.8" stroke="#1f7f8f" stroke-width="1"/><path d="M0.3 9.5C3.5 4 14.5 4 17.7 9.5C14.5 14.6 3.5 14.6 0.3 9.5Z" fill="#fff" stroke="#111" stroke-width="1.35"/><path d="M2.5 12C6 15.6 12 15.6 15.5 12" fill="none" stroke="#111" stroke-width="1"/><circle cx="9" cy="9.3" r="3.6" fill="#1a1a1a"/><circle cx="9" cy="9.3" r="1.1" fill="#999"/></svg>
<svg style="left:513.5px;top:59.8px" width="18" height="17" viewBox="0 0 18 17"><path d="M4.0 6.0L1.5 3.8" stroke="#1f7f8f" stroke-width="1"/><path d="M6.0 5.6L4.5 3.0" stroke="#1f7f8f" stroke-width="1"/><path d="M8.0 5.2L7.5 2.2" stroke="#1f7f8f" stroke-width="1"/><path d="M10.0 5.2L10.5 2.2" stroke="#1f7f8f" stroke-width="1"/><path d="M12.0 5.6L13.5 3.0" stroke="#1f7f8f" stroke-width="1"/><path d="M14.0 6.0L16.5 3.8" stroke="#1f7f8f" stroke-width="1"/><path d="M0.3 9.5C3.5 4 14.5 4 17.7 9.5C14.5 14.6 3.5 14.6 0.3 9.5Z" fill="#fff" stroke="#111" stroke-width="1.35"/><path d="M2.5 12C6 15.6 12 15.6 15.5 12" fill="none" stroke="#111" stroke-width="1"/><circle cx="9" cy="9.3" r="3.6" fill="#6a6a6a" stroke="#222" stroke-width=".7"/><circle cx="9" cy="9.3" r="1.5" fill="#b0b0b0" stroke="#444" stroke-width=".5"/></svg>
<div class="a" style="left:224.4px;top:81.6px;width:842.2px;height:501.4px;background:#fff;border:1px solid;border-color:#a8a49c #fff #fff #a8a49c;box-shadow:inset 1px 1px 0 #404040"></div>
<svg style="left:0;top:0" width="1200" height="675" viewBox="0 0 1200 675"><path d="M247.00 93.8V98M250.85 93.8V98M254.70 93.8V98M258.55 93.8V98M266.25 93.8V98M270.10 93.8V98M273.95 93.8V98M277.80 93.8V98M285.50 93.8V98M289.35 93.8V98M293.20 93.8V98M297.05 93.8V98M304.75 93.8V98M308.60 93.8V98M312.45 93.8V98M316.30 93.8V98M324.00 93.8V98M327.85 93.8V98M331.70 93.8V98M335.55 93.8V98M343.25 93.8V98M347.10 93.8V98M350.95 93.8V98M354.80 93.8V98M362.50 93.8V98M366.35 93.8V98M370.20 93.8V98M374.05 93.8V98M381.75 93.8V98M385.60 93.8V98M389.45 93.8V98M393.30 93.8V98M401.00 93.8V98M404.85 93.8V98M408.70 93.8V98M412.55 93.8V98M420.25 93.8V98M424.10 93.8V98M427.95 93.8V98M431.80 93.8V98M439.50 93.8V98M443.35 93.8V98M447.20 93.8V98M451.05 93.8V98M458.75 93.8V98M462.60 93.8V98M466.45 93.8V98M470.30 93.8V98M478.00 93.8V98M481.85 93.8V98M485.70 93.8V98M489.55 93.8V98M497.25 93.8V98M501.10 93.8V98M504.95 93.8V98M508.80 93.8V98M516.50 93.8V98M520.35 93.8V98M524.20 93.8V98M528.05 93.8V98M535.75 93.8V98M539.60 93.8V98M543.45 93.8V98M547.30 93.8V98M555.00 93.8V98M558.85 93.8V98M562.70 93.8V98M566.55 93.8V98M574.25 93.8V98M578.10 93.8V98M581.95 93.8V98M585.80 93.8V98M593.50 93.8V98M597.35 93.8V98M601.20 93.8V98M605.05 93.8V98M612.75 93.8V98M616.60 93.8V98M620.45 93.8V98M624.30 93.8V98M632.00 93.8V98M635.85 93.8V98M639.70 93.8V98M643.55 93.8V98M651.25 93.8V98M655.10 93.8V98M658.95 93.8V98M662.80 93.8V98M670.50 93.8V98M674.35 93.8V98M678.20 93.8V98M682.05 93.8V98M689.75 93.8V98M693.60 93.8V98M697.45 93.8V98M701.30 93.8V98M709.00 93.8V98M712.85 93.8V98M716.70 93.8V98M720.55 93.8V98M728.25 93.8V98M732.10 93.8V98M735.95 93.8V98M739.80 93.8V98M747.50 93.8V98M751.35 93.8V98M755.20 93.8V98M759.05 93.8V98M766.75 93.8V98M770.60 93.8V98M774.45 93.8V98M778.30 93.8V98M786.00 93.8V98M789.85 93.8V98M793.70 93.8V98M797.55 93.8V98M805.25 93.8V98M809.10 93.8V98M812.95 93.8V98M816.80 93.8V98M824.50 93.8V98M828.35 93.8V98M832.20 93.8V98M836.05 93.8V98M843.75 93.8V98M847.60 93.8V98M851.45 93.8V98M855.30 93.8V98M863.00 93.8V98M866.85 93.8V98M870.70 93.8V98M874.55 93.8V98M882.25 93.8V98M886.10 93.8V98M889.95 93.8V98M893.80 93.8V98M901.50 93.8V98M905.35 93.8V98M909.20 93.8V98M913.05 93.8V98M920.75 93.8V98M924.60 93.8V98M928.45 93.8V98M932.30 93.8V98M940.00 93.8V98M943.85 93.8V98M947.70 93.8V98M951.55 93.8V98M959.25 93.8V98M963.10 93.8V98M966.95 93.8V98M970.80 93.8V98M978.50 93.8V98M982.35 93.8V98M986.20 93.8V98M990.05 93.8V98M997.75 93.8V98M1001.60 93.8V98M1005.45 93.8V98M1009.30 93.8V98M1017.00 93.8V98M1020.85 93.8V98M1024.70 93.8V98M1028.55 93.8V98M1036.25 93.8V98M1040.10 93.8V98M1043.95 93.8V98M1047.80 93.8V98" stroke="#333" stroke-width=".8"/><path d="M243.15 91.7V98M281.65 91.7V98M320.15 91.7V98M358.65 91.7V98M397.15 91.7V98M435.65 91.7V98M474.15 91.7V98M512.65 91.7V98M551.15 91.7V98M589.65 91.7V98M628.15 91.7V98M666.65 91.7V98M705.15 91.7V98M743.65 91.7V98M782.15 91.7V98M820.65 91.7V98M859.15 91.7V98M897.65 91.7V98M936.15 91.7V98M974.65 91.7V98M1013.15 91.7V98M1051.65 91.7V98" stroke="#222" stroke-width=".8"/><path d="M262.40 90V98M300.90 90V98M339.40 90V98M377.90 90V98M416.40 90V98M454.90 90V98M493.40 90V98M531.90 90V98M570.40 90V98M608.90 90V98M647.40 90V98M685.90 90V98M724.40 90V98M762.90 90V98M801.40 90V98M839.90 90V98M878.40 90V98M916.90 90V98M955.40 90V98M993.90 90V98M1032.40 90V98" stroke="#111" stroke-width=".9"/><path d="M236.8 561.45H241M236.8 557.60H241M236.8 553.75H241M236.8 549.90H241M236.8 542.20H241M236.8 538.35H241M236.8 534.50H241M236.8 530.65H241M236.8 522.95H241M236.8 519.10H241M236.8 515.25H241M236.8 511.40H241M236.8 503.70H241M236.8 499.85H241M236.8 496.00H241M236.8 492.15H241M236.8 484.45H241M236.8 480.60H241M236.8 476.75H241M236.8 472.90H241M236.8 465.20H241M236.8 461.35H241M236.8 457.50H241M236.8 453.65H241M236.8 445.95H241M236.8 442.10H241M236.8 438.25H241M236.8 434.40H241M236.8 426.70H241M236.8 422.85H241M236.8 419.00H241M236.8 415.15H241M236.8 407.45H241M236.8 403.60H241M236.8 399.75H241M236.8 395.90H241M236.8 388.20H241M236.8 384.35H241M236.8 380.50H241M236.8 376.65H241M236.8 368.95H241M236.8 365.10H241M236.8 361.25H241M236.8 357.40H241M236.8 349.70H241M236.8 345.85H241M236.8 342.00H241M236.8 338.15H241M236.8 330.45H241M236.8 326.60H241M236.8 322.75H241M236.8 318.90H241M236.8 311.20H241M236.8 307.35H241M236.8 303.50H241M236.8 299.65H241M236.8 291.95H241M236.8 288.10H241M236.8 284.25H241M236.8 280.40H241M236.8 272.70H241M236.8 268.85H241M236.8 265.00H241M236.8 261.15H241M236.8 253.45H241M236.8 249.60H241M236.8 245.75H241M236.8 241.90H241M236.8 234.20H241M236.8 230.35H241M236.8 226.50H241M236.8 222.65H241M236.8 214.95H241M236.8 211.10H241M236.8 207.25H241M236.8 203.40H241M236.8 195.70H241M236.8 191.85H241M236.8 188.00H241M236.8 184.15H241M236.8 176.45H241M236.8 172.60H241M236.8 168.75H241M236.8 164.90H241M236.8 157.20H241M236.8 153.35H241M236.8 149.50H241M236.8 145.65H241M236.8 137.95H241M236.8 134.10H241M236.8 130.25H241M236.8 126.40H241M236.8 118.70H241M236.8 114.85H241M236.8 111.00H241M236.8 107.15H241" stroke="#333" stroke-width=".8"/><path d="M234.7 546.05H241M234.7 507.55H241M234.7 469.05H241M234.7 430.55H241M234.7 392.05H241M234.7 353.55H241M234.7 315.05H241M234.7 276.55H241M234.7 238.05H241M234.7 199.55H241M234.7 161.05H241M234.7 122.55H241" stroke="#222" stroke-width=".8"/><path d="M233 565.30H241M233 526.80H241M233 488.30H241M233 449.80H241M233 411.30H241M233 372.80H241M233 334.30H241M233 295.80H241M233 257.30H241M233 218.80H241M233 180.30H241M233 141.80H241M233 103.30H241" stroke="#111" stroke-width=".9"/><path d="M240.7 97.8H1054.3M240.7 97.8V569.8" stroke="#222" stroke-width="1" fill="none"/><path d="M657.5 84V98M706.3 84V98" stroke="#222" stroke-width="1"/><path d="M227 302H241" stroke="#222" stroke-width="1.2"/><text x="264.7" y="89.3" font-size="6.5" text-anchor="middle" fill="#222" font-family="Liberation Sans,sans-serif">-100</text><text x="301.2" y="89.3" font-size="6.5" text-anchor="middle" fill="#222" font-family="Liberation Sans,sans-serif">-90</text><text x="339.7" y="89.3" font-size="6.5" text-anchor="middle" fill="#222" font-family="Liberation Sans,sans-serif">-80</text><text x="378.2" y="89.3" font-size="6.5" text-anchor="middle" fill="#222" font-family="Liberation Sans,sans-serif">-70</text><text x="416.7" y="89.3" font-size="6.5" text-anchor="middle" fill="#222" font-family="Liberation Sans,sans-serif">-60</text><text x="455.2" y="89.3" font-size="6.5" text-anchor="middle" fill="#222" font-family="Liberation Sans,sans-serif">-50</text><text x="493.7" y="89.3" font-size="6.5" text-anchor="middle" fill="#222" font-family="Liberation Sans,sans-serif">-40</text><text x="532.2" y="89.3" font-size="6.5" text-anchor="middle" fill="#222" font-family="Liberation Sans,sans-serif">-30</text><text x="570.7" y="89.3" font-size="6.5" text-anchor="middle" fill="#222" font-family="Liberation Sans,sans-serif">-20</text><text x="609.2" y="89.3" font-size="6.5" text-anchor="middle" fill="#222" font-family="Liberation Sans,sans-serif">-10</text><text x="647.7" y="89.3" font-size="6.5" text-anchor="middle" fill="#222" font-family="Liberation Sans,sans-serif">0</text><text x="686.2" y="89.3" font-size="6.5" text-anchor="middle" fill="#222" font-family="Liberation Sans,sans-serif">10</text><text x="724.7" y="89.3" font-size="6.5" text-anchor="middle" fill="#222" font-family="Liberation Sans,sans-serif">20</text><text x="763.2" y="89.3" font-size="6.5" text-anchor="middle" fill="#222" font-family="Liberation Sans,sans-serif">30</text><text x="801.7" y="89.3" font-size="6.5" text-anchor="middle" fill="#222" font-family="Liberation Sans,sans-serif">40</text><text x="840.2" y="89.3" font-size="6.5" text-anchor="middle" fill="#222" font-family="Liberation Sans,sans-serif">50</text><text x="878.7" y="89.3" font-size="6.5" text-anchor="middle" fill="#222" font-family="Liberation Sans,sans-serif">60</text><text x="917.2" y="89.3" font-size="6.5" text-anchor="middle" fill="#222" font-family="Liberation Sans,sans-serif">70</text><text x="955.7" y="89.3" font-size="6.5" text-anchor="middle" fill="#222" font-family="Liberation Sans,sans-serif">80</text><text x="994.2" y="89.3" font-size="6.5" text-anchor="middle" fill="#222" font-family="Liberation Sans,sans-serif">90</text><text x="1031.1" y="89.3" font-size="6.5" text-anchor="middle" fill="#222" font-family="Liberation Sans,sans-serif">100</text><text transform="translate(232.2 563.4) rotate(-90)" font-size="6.5" text-anchor="middle" fill="#222" font-family="Liberation Sans,sans-serif">-60</text><text transform="translate(232.2 524.9) rotate(-90)" font-size="6.5" text-anchor="middle" fill="#222" font-family="Liberation Sans,sans-serif">-50</text><text transform="translate(232.2 486.4) rotate(-90)" font-size="6.5" text-anchor="middle" fill="#222" font-family="Liberation Sans,sans-serif">-40</text><text transform="translate(232.2 447.9) rotate(-90)" font-size="6.5" text-anchor="middle" fill="#222" font-family="Liberation Sans,sans-serif">-30</text><text transform="translate(232.2 409.4) rotate(-90)" font-size="6.5" text-anchor="middle" fill="#222" font-family="Liberation Sans,sans-serif">-20</text><text transform="translate(232.2 370.9) rotate(-90)" font-size="6.5" text-anchor="middle" fill="#222" font-family="Liberation Sans,sans-serif">-10</text><text transform="translate(232.2 334.6) rotate(-90)" font-size="6.5" text-anchor="middle" fill="#222" font-family="Liberation Sans,sans-serif">0</text><text transform="translate(232.2 296.1) rotate(-90)" font-size="6.5" text-anchor="middle" fill="#222" font-family="Liberation Sans,sans-serif">10</text><text transform="translate(232.2 257.6) rotate(-90)" font-size="6.5" text-anchor="middle" fill="#222" font-family="Liberation Sans,sans-serif">20</text><text transform="translate(232.2 219.1) rotate(-90)" font-size="6.5" text-anchor="middle" fill="#222" font-family="Liberation Sans,sans-serif">30</text><text transform="translate(232.2 180.6) rotate(-90)" font-size="6.5" text-anchor="middle" fill="#222" font-family="Liberation Sans,sans-serif">40</text><text transform="translate(232.2 142.1) rotate(-90)" font-size="6.5" text-anchor="middle" fill="#222" font-family="Liberation Sans,sans-serif">50</text><text transform="translate(232.2 103.6) rotate(-90)" font-size="6.5" text-anchor="middle" fill="#222" font-family="Liberation Sans,sans-serif">60</text><rect x="440" y="127.3" width="423" height="423" fill="#808080"/><rect x="436.2" y="123.4" width="423.1" height="422.9" fill="#fff" stroke="#282828" stroke-width="1"/><path d="M647.5 99V570" stroke="#111" stroke-width="1" stroke-dasharray="1.9 2.77" stroke-dashoffset="0"/><path d="M242 334.7H1055" stroke="#111" stroke-width="1" stroke-dasharray="1.9 2.77"/><rect x="574.0" y="315.4" width="4.6" height="4.6" fill="#404040"/><rect x="574.0" y="332.5" width="4.6" height="4.6" fill="#404040"/><rect x="574.0" y="350.4" width="4.6" height="4.6" fill="#404040"/><rect x="625.1" y="315.4" width="4.6" height="4.6" fill="#404040"/><path d="M625.9 333.3l3 3m0-3l-3 3" stroke="#555" stroke-width=".8"/><rect x="625.1" y="350.4" width="4.6" height="4.6" fill="#404040"/><rect x="675.2" y="315.4" width="4.6" height="4.6" fill="#404040"/><rect x="675.2" y="332.5" width="4.6" height="4.6" fill="#404040"/><rect x="675.2" y="350.4" width="4.6" height="4.6" fill="#404040"/></svg>
<div class="t" style="left:248.5px;top:107px;font-size:10px;line-height:11px;letter-spacing:0.114px;color:#000;font-weight:bold;">Demo version-only for evaluation</div>
<div class="t" style="left:581.3px;top:316px;font-size:34.2px;line-height:38px;letter-spacing:1.123px;color:#000;font-weight:bold;">TEXT</div>
<div class="a dither" style="left:1054.3px;top:84px;width:12.2px;height:486px"></div>
<div class="btn" style="left:1054.5px;top:83.8px;width:11.8px;height:10.8px;"><svg style="left:2.4px;top:2.9px" width="5" height="3" viewBox="0 0 5 3"><path d="M0 3L2.5 0L5 3Z" fill="#000"/></svg></div>
<div class="btn" style="left:1054.5px;top:558.2px;width:11.8px;height:11.2px;"><svg style="left:2.4px;top:3.1px" width="5" height="3" viewBox="0 0 5 3"><path d="M0 0H5L2.5 3Z" fill="#000"/></svg></div>
<div class="btn" style="left:1054.5px;top:320.7px;width:11.8px;height:11.0px;"></div>
<div class="a dither" style="left:227px;top:569.8px;width:827.3px;height:12px"></div>
<div class="btn" style="left:226.5px;top:570.0px;width:11.6px;height:11.6px;"><svg style="left:3.3px;top:2.3px" width="3" height="5" viewBox="0 0 3 5"><path d="M3 0V5L0 2.5Z" fill="#000"/></svg></div>
<div class="btn" style="left:1042.7px;top:570.0px;width:11.6px;height:11.6px;"><svg style="left:3.3px;top:2.3px" width="3" height="5" viewBox="0 0 3 5"><path d="M0 0V5L3 2.5Z" fill="#000"/></svg></div>
<div class="btn" style="left:634.0px;top:570.0px;width:12.0px;height:11.6px;"></div>
<div class="a" style="left:1054.3px;top:569.8px;width:12.2px;height:12.2px;background:#d4d0c8"></div>
<div class="btn" style="left:226.2px;top:589.2px;width:42.8px;height:31.8px;"></div>
<div class="t" style="left:233.5px;top:601px;font-size:8.2px;line-height:9px;letter-spacing:-0.154px;">Red(F1)</div>
<div class="btnp" style="left:271.0px;top:589.2px;width:43.2px;height:32.0px;"></div>
<div class="t" style="left:275.0px;top:601px;font-size:8.2px;line-height:9px;letter-spacing:-0.340px;">MARK(F2)</div>
<div class="chk" style="left:318.4px;top:592.0px;width:8.8px;height:9.0px;"></div>
<div class="t" style="left:332.0px;top:593px;font-size:8.2px;line-height:9px;letter-spacing:0.026px;">[C]Бесконечн:</div>
<div class="chk" style="left:318.4px;top:610.0px;width:8.8px;height:9.0px;"></div>
<div class="t" style="left:332.0px;top:611px;font-size:8.2px;line-height:9px;letter-spacing:-0.077px;">[S]Выделенно</div>
<div class="a" style="left:334px;top:600.5px;width:4.5px;height:.7px;background:#000"></div>
<div class="a" style="left:334px;top:618.5px;width:4.5px;height:.7px;background:#000"></div>
<div class="t" style="left:390.4px;top:593px;font-size:8.2px;line-height:9px;letter-spacing:-0.235px;">Part</div>
<div class="t" style="left:390.4px;top:610px;font-size:8.2px;line-height:9px;letter-spacing:0.003px;">Число</div>
<div class="sunk" style="left:421.6px;top:589.4px;width:32.2px;height:13.4px;"></div>
<div class="t" style="left:425.0px;top:593px;font-size:8.2px;line-height:9px;">0</div>
<div class="sunk" style="left:421.6px;top:606.0px;width:32.2px;height:13.6px;"></div>
<div class="t" style="left:425.0px;top:609px;font-size:8.2px;line-height:9px;">0</div>
<div class="btn" style="left:456.0px;top:589.0px;width:14.2px;height:16.2px;"></div>
<div class="t" style="left:460.5px;top:593px;font-size:8.2px;line-height:9px;">R</div>
<div class="btn" style="left:471.0px;top:607.0px;width:43.2px;height:17.2px;"></div>
<div class="t" style="left:473.5px;top:611px;font-size:8.2px;line-height:9px;letter-spacing:-0.138px;">Парам(F3)</div>
<div class="sunkg" style="left:515.6px;top:589.0px;width:56.6px;height:14.2px;"></div>
<div class="t" style="left:517.5px;top:593px;font-size:8.2px;line-height:9px;letter-spacing:0.010px;">00:00:00</div>
<div class="sunkg" style="left:515.6px;top:608.0px;width:56.6px;height:14.6px;"></div>
<div class="t" style="left:517.5px;top:611px;font-size:8.2px;line-height:9px;letter-spacing:0.010px;">00:00:00</div>
<div class="chk" style="left:574.4px;top:592.0px;width:9.2px;height:9.0px;"></div>
<div class="t" style="left:588.4px;top:593px;font-size:8.2px;line-height:9px;letter-spacing:0.204px;">Контур/рамка</div>
<div class="chk" style="left:574.4px;top:610.0px;width:9.2px;height:9.0px;"></div>
<div class="t" style="left:588.4px;top:611px;font-size:8.2px;line-height:9px;letter-spacing:0.143px;width:64px;overflow:hidden;">Поточный режим</div>
<div class="a" style="left:1069.8px;top:56px;width:1px;height:571px;background:#8c8c8c"></div>
<div class="a" style="left:1070.8px;top:56px;width:1px;height:571px;background:#f0eeea"></div>
<div class="a" style="left:1074.5px;top:57.5px;width:112.5px;height:9.3px;background:linear-gradient(90deg,#0a246a 0%,#2a4a8c 35%,#a6caf0 100%)"></div>
<div class="t" style="left:1076.0px;top:58px;font-size:8.2px;line-height:9px;letter-spacing:-0.017px;color:#d8d4cc;">Параметры Маркировки</div>
<svg style="left:1190px;top:59.8px" width="5" height="5" viewBox="0 0 5 5"><path d="M0.5 0.5L4.5 4.5M4.5 0.5L0.5 4.5" stroke="#000" stroke-width="1.2"/></svg>
<div class="sunk" style="left:1076.5px;top:83.3px;width:120.5px;height:105.7px;"></div>
<div class="a" style="left:1078.5px;top:85.0px;width:57.0px;height:12.3px;background:#d4d0c8;border:1px solid;border-color:#fff #808080 #808080 #fff;box-shadow:0 1px 0 #404040"></div>
<div class="a" style="left:1135.5px;top:85.0px;width:28.5px;height:12.3px;background:#d4d0c8;border:1px solid;border-color:#fff #808080 #808080 #fff;box-shadow:0 1px 0 #404040"></div>
<div class="a" style="left:1164.0px;top:85.0px;width:21.5px;height:12.3px;background:#d4d0c8;border:1px solid;border-color:#fff #808080 #808080 #fff;box-shadow:0 1px 0 #404040"></div>
<div class="t" style="left:1082.5px;top:87px;font-size:8.2px;line-height:9px;letter-spacing:-0.038px;">Маркер No.</div>
<div class="t" style="left:1140.0px;top:87px;font-size:8.2px;line-height:9px;letter-spacing:0.156px;">Цвет</div>
<div class="t" style="left:1168.0px;top:87px;font-size:8.2px;line-height:9px;letter-spacing:-0.053px;">Вкл.</div>
<svg style="left:1078.5px;top:99.9px" width="8" height="8" viewBox="0 0 8 8"><path d="M4 0V8M0 4H8M1.2 1.2L6.8 6.8M6.8 1.2L1.2 6.8" stroke="#f00000" stroke-width=".7"/><circle cx="4" cy="4" r="1" fill="#d00000"/></svg>
<div class="a" style="left:1087.0px;top:99.5px;width:48.3px;height:9.2px;background:#0a246a"></div>
<div class="t" style="left:1090.0px;top:100px;font-size:8.2px;line-height:9px;letter-spacing:0.020px;color:#fff;">0 Default</div>
<div class="t" style="left:1168.8px;top:100px;font-size:8.2px;line-height:9px;letter-spacing:-0.253px;">Вкл.</div>
<div class="a" style="left:1136.5px;top:99.9px;width:26.7px;height:8.4px;background:#000000;border:.7px solid #222"></div>
<div class="a" style="left:1087px;top:108.9px;width:98px;height:.8px;background:#d4d0c8"></div>
<svg style="left:1078.5px;top:110.3px" width="8" height="8" viewBox="0 0 8 8"><path d="M4 0V8M0 4H8M1.2 1.2L6.8 6.8M6.8 1.2L1.2 6.8" stroke="#f00000" stroke-width=".7"/><circle cx="4" cy="4" r="1" fill="#d00000"/></svg>
<div class="t" style="left:1090.0px;top:111px;font-size:8.2px;line-height:9px;letter-spacing:0.020px;color:#000;">1 Default</div>
<div class="t" style="left:1168.8px;top:111px;font-size:8.2px;line-height:9px;letter-spacing:-0.253px;">Вкл.</div>
<div class="a" style="left:1136.5px;top:110.3px;width:26.7px;height:8.4px;background:#0000ff;border:.7px solid #222"></div>
<div class="a" style="left:1087px;top:119.3px;width:98px;height:.8px;background:#d4d0c8"></div>
<svg style="left:1078.5px;top:120.8px" width="8" height="8" viewBox="0 0 8 8"><path d="M4 0V8M0 4H8M1.2 1.2L6.8 6.8M6.8 1.2L1.2 6.8" stroke="#f00000" stroke-width=".7"/><circle cx="4" cy="4" r="1" fill="#d00000"/></svg>
<div class="t" style="left:1090.0px;top:121px;font-size:8.2px;line-height:9px;letter-spacing:0.020px;color:#000;">2 Default</div>
<div class="t" style="left:1168.8px;top:121px;font-size:8.2px;line-height:9px;letter-spacing:-0.253px;">Вкл.</div>
<div class="a" style="left:1136.5px;top:120.8px;width:26.7px;height:8.4px;background:#ff0000;border:.7px solid #222"></div>
<div class="a" style="left:1087px;top:129.8px;width:98px;height:.8px;background:#d4d0c8"></div>
<svg style="left:1078.5px;top:131.2px" width="8" height="8" viewBox="0 0 8 8"><path d="M4 0V8M0 4H8M1.2 1.2L6.8 6.8M6.8 1.2L1.2 6.8" stroke="#f00000" stroke-width=".7"/><circle cx="4" cy="4" r="1" fill="#d00000"/></svg>
<div class="t" style="left:1090.0px;top:132px;font-size:8.2px;line-height:9px;letter-spacing:0.020px;color:#000;">3 Default</div>
<div class="t" style="left:1168.8px;top:132px;font-size:8.2px;line-height:9px;letter-spacing:-0.253px;">Вкл.</div>
<div class="a" style="left:1136.5px;top:131.2px;width:26.7px;height:8.4px;background:#00ff00;border:.7px solid #222"></div>
<div class="a" style="left:1087px;top:140.2px;width:98px;height:.8px;background:#d4d0c8"></div>
<svg style="left:1078.5px;top:141.7px" width="8" height="8" viewBox="0 0 8 8"><path d="M4 0V8M0 4H8M1.2 1.2L6.8 6.8M6.8 1.2L1.2 6.8" stroke="#f00000" stroke-width=".7"/><circle cx="4" cy="4" r="1" fill="#d00000"/></svg>
<div class="t" style="left:1090.0px;top:142px;font-size:8.2px;line-height:9px;letter-spacing:0.020px;color:#000;">4 Default</div>
<div class="t" style="left:1168.8px;top:142px;font-size:8.2px;line-height:9px;letter-spacing:-0.253px;">Вкл.</div>
<div class="a" style="left:1136.5px;top:141.7px;width:26.7px;height:8.4px;background:#ff00ff;border:.7px solid #222"></div>
<div class="a" style="left:1087px;top:150.7px;width:98px;height:.8px;background:#d4d0c8"></div>
<svg style="left:1078.5px;top:152.2px" width="8" height="8" viewBox="0 0 8 8"><path d="M4 0V8M0 4H8M1.2 1.2L6.8 6.8M6.8 1.2L1.2 6.8" stroke="#f00000" stroke-width=".7"/><circle cx="4" cy="4" r="1" fill="#d00000"/></svg>
<div class="t" style="left:1090.0px;top:153px;font-size:8.2px;line-height:9px;letter-spacing:0.020px;color:#000;">5 Default</div>
<div class="t" style="left:1168.8px;top:153px;font-size:8.2px;line-height:9px;letter-spacing:-0.253px;">Вкл.</div>
<div class="a" style="left:1136.5px;top:152.2px;width:26.7px;height:8.4px;background:#ffff00;border:.7px solid #222"></div>
<div class="a" style="left:1087px;top:161.2px;width:98px;height:.8px;background:#d4d0c8"></div>
<svg style="left:1078.5px;top:162.6px" width="8" height="8" viewBox="0 0 8 8"><path d="M4 0V8M0 4H8M1.2 1.2L6.8 6.8M6.8 1.2L1.2 6.8" stroke="#f00000" stroke-width=".7"/><circle cx="4" cy="4" r="1" fill="#d00000"/></svg>
<div class="t" style="left:1090.0px;top:163px;font-size:8.2px;line-height:9px;letter-spacing:0.020px;color:#000;">6 Default</div>
<div class="t" style="left:1168.8px;top:163px;font-size:8.2px;line-height:9px;letter-spacing:-0.253px;">Вкл.</div>
<div class="a" style="left:1136.5px;top:162.6px;width:26.7px;height:8.4px;background:#ff8080;border:.7px solid #222"></div>
<div class="a" style="left:1087px;top:171.6px;width:98px;height:.8px;background:#d4d0c8"></div>
<div class="a" style="left:1078.5px;top:172.4px;width:106px;height:4.6px;overflow:hidden"><svg style="left:0;top:0.6px" width="8" height="8" viewBox="0 0 8 8"><path d="M4 0V8M0 4H8M1.2 1.2L6.8 6.8M6.8 1.2L1.2 6.8" stroke="#f00000" stroke-width=".9"/></svg><div class="t" style="left:11.5px;top:1px;font-size:8.2px;line-height:9px">7 Default</div><div class="a" style="left:58px;top:1px;width:26.8px;height:8px;background:#800000;border:1px solid #000"></div><div class="t" style="left:90.3px;top:1px;font-size:8.2px;line-height:9px">Вкл.</div></div>
<div class="a" style="left:1135.5px;top:98.5px;width:.8px;height:79px;background:#d4d0c8"></div>
<div class="a" style="left:1164px;top:98.5px;width:.8px;height:79px;background:#d4d0c8"></div>
<div class="a dither" style="left:1185.5px;top:85.3px;width:10px;height:92px"></div>
<div class="btn" style="left:1185.5px;top:85.3px;width:10.0px;height:11.5px;"><svg style="left:1.5px;top:3.2px" width="5" height="3" viewBox="0 0 5 3"><path d="M0 3L2.5 0L5 3Z" fill="#000"/></svg></div>
<div class="btn" style="left:1185.5px;top:96.8px;width:10.0px;height:4.5px;"></div>
<div class="btn" style="left:1185.5px;top:165.0px;width:10.0px;height:12.0px;"><svg style="left:1.5px;top:3.5px" width="5" height="3" viewBox="0 0 5 3"><path d="M0 0H5L2.5 3Z" fill="#000"/></svg></div>
<div class="a dither" style="left:1078.5px;top:177.5px;width:106.5px;height:10px"></div>
<div class="btn" style="left:1078.5px;top:177.5px;width:10.5px;height:10.0px;"><svg style="left:2.8px;top:1.5px" width="3" height="5" viewBox="0 0 3 5"><path d="M3 0V5L0 2.5Z" fill="#000"/></svg></div>
<div class="btn" style="left:1089.0px;top:177.5px;width:72.3px;height:10.0px;"></div>
<div class="btn" style="left:1172.0px;top:177.5px;width:12.5px;height:10.0px;"><svg style="left:3.8px;top:1.5px" width="3" height="5" viewBox="0 0 3 5"><path d="M0 0V5L3 2.5Z" fill="#000"/></svg></div>
<div class="a" style="left:1185.5px;top:177.5px;width:10px;height:10px;background:#d4d0c8"></div>
<div class="a" style="left:1078.0px;top:193.2px;width:14.0px;height:14.8px;background:#000000"></div>
<div class="a" style="left:1092.7px;top:193.2px;width:14.0px;height:14.8px;background:#0000ff"></div>
<div class="a" style="left:1107.4px;top:193.2px;width:14.0px;height:14.8px;background:#ff0000"></div>
<div class="a" style="left:1122.2px;top:193.2px;width:14.0px;height:14.8px;background:#00ff00"></div>
<div class="a" style="left:1136.9px;top:193.2px;width:14.0px;height:14.8px;background:#ff00ff"></div>
<div class="a" style="left:1151.6px;top:193.2px;width:14.0px;height:14.8px;background:#ffff00"></div>
<div class="a" style="left:1166.3px;top:193.2px;width:14.0px;height:14.8px;background:#ff8080"></div>
<div class="a" style="left:1181.0px;top:193.2px;width:14.0px;height:14.8px;background:#800000"></div>
<div class="grp" style="left:1076.5px;top:211.0px;width:120.0px;height:230.5px;"></div>
<div class="chk" style="left:1080.8px;top:216.2px;width:9.0px;height:9.3px;"></div>
<div class="t" style="left:1093.3px;top:217px;font-size:8.2px;line-height:9px;letter-spacing:0.023px;">Парам. по умолчанию</div>
<div class="sunkg" style="left:1078.0px;top:229.5px;width:69.6px;height:13.5px;"></div>
<div class="t" style="left:1080.0px;top:233px;font-size:8.2px;line-height:9px;letter-spacing:0.066px;max-width:67px;overflow:hidden;">Номер маркера</div>
<div class="sunkg" style="left:1150.0px;top:229.5px;width:43.5px;height:13.5px;box-shadow:inset 1px 1px 0 #404040"></div>
<div class="t" style="left:1153.0px;top:233px;font-size:8.2px;line-height:9px;color:#808080;">0</div>
<div class="sunkg" style="left:1078.0px;top:245.7px;width:69.6px;height:14.0px;"></div>
<div class="t" style="left:1080.0px;top:249px;font-size:8.2px;line-height:9px;letter-spacing:0.159px;max-width:67px;overflow:hidden;">Кол-во Повторов</div>
<div class="sunk" style="left:1150.0px;top:245.7px;width:43.5px;height:14.0px;"></div>
<div class="t" style="left:1153.0px;top:249px;font-size:8.2px;line-height:9px;">100</div>
<div class="a" style="left:1182.3px;top:247.2px;width:10.0px;height:5.5px;background:#d4d0c8;border:1px solid;border-color:#fff #707070 #707070 #fff"><svg style="left:2.4px;top:0.9px" width="3.2" height="1.7" viewBox="0 0 3.2 1.7"><path d="M0 1.7L1.6 0L3.2 1.7Z" fill="#000"/></svg></div>
<div class="a" style="left:1182.3px;top:252.7px;width:10.0px;height:5.5px;background:#d4d0c8;border:1px solid;border-color:#fff #707070 #707070 #fff"><svg style="left:2.4px;top:0.9px" width="3.2" height="1.7" viewBox="0 0 3.2 1.7"><path d="M0 0H3.2L1.6 1.7Z" fill="#000"/></svg></div>
<div class="sunkg" style="left:1078.0px;top:263.0px;width:69.6px;height:14.0px;"></div>
<div class="t" style="left:1080.0px;top:266px;font-size:8.2px;line-height:9px;letter-spacing:0.082px;max-width:67px;overflow:hidden;">Скорость(мм/Сек</div>
<div class="sunk" style="left:1150.0px;top:263.0px;width:43.5px;height:14.0px;"></div>
<div class="t" style="left:1153.0px;top:266px;font-size:8.2px;line-height:9px;">500</div>
<div class="a" style="left:1182.3px;top:264.5px;width:10.0px;height:5.5px;background:#d4d0c8;border:1px solid;border-color:#fff #707070 #707070 #fff"><svg style="left:2.4px;top:0.9px" width="3.2" height="1.7" viewBox="0 0 3.2 1.7"><path d="M0 1.7L1.6 0L3.2 1.7Z" fill="#000"/></svg></div>
<div class="a" style="left:1182.3px;top:270.0px;width:10.0px;height:5.5px;background:#d4d0c8;border:1px solid;border-color:#fff #707070 #707070 #fff"><svg style="left:2.4px;top:0.9px" width="3.2" height="1.7" viewBox="0 0 3.2 1.7"><path d="M0 0H3.2L1.6 1.7Z" fill="#000"/></svg></div>
<div class="sunkg" style="left:1078.0px;top:280.5px;width:69.6px;height:13.8px;"></div>
<div class="t" style="left:1080.0px;top:284px;font-size:8.2px;line-height:9px;letter-spacing:-0.155px;max-width:67px;overflow:hidden;">Мощность(%)</div>
<div class="sunk" style="left:1150.0px;top:280.5px;width:43.5px;height:13.8px;"></div>
<div class="t" style="left:1153.0px;top:284px;font-size:8.2px;line-height:9px;">50</div>
<div class="a" style="left:1182.3px;top:282.0px;width:10.0px;height:5.4px;background:#d4d0c8;border:1px solid;border-color:#fff #707070 #707070 #fff"><svg style="left:2.4px;top:0.9px" width="3.2" height="1.7" viewBox="0 0 3.2 1.7"><path d="M0 1.7L1.6 0L3.2 1.7Z" fill="#000"/></svg></div>
<div class="a" style="left:1182.3px;top:287.4px;width:10.0px;height:5.4px;background:#d4d0c8;border:1px solid;border-color:#fff #707070 #707070 #fff"><svg style="left:2.4px;top:0.9px" width="3.2" height="1.7" viewBox="0 0 3.2 1.7"><path d="M0 0H3.2L1.6 1.7Z" fill="#000"/></svg></div>
<div class="sunkg" style="left:1078.0px;top:297.8px;width:69.6px;height:13.9px;"></div>
<div class="t" style="left:1080.0px;top:301px;font-size:8.2px;line-height:9px;letter-spacing:-0.029px;max-width:67px;overflow:hidden;">Частота(KHz)</div>
<div class="sunk" style="left:1150.0px;top:297.8px;width:43.5px;height:13.9px;"></div>
<div class="t" style="left:1153.0px;top:301px;font-size:8.2px;line-height:9px;">20</div>
<div class="a" style="left:1182.3px;top:299.3px;width:10.0px;height:5.4px;background:#d4d0c8;border:1px solid;border-color:#fff #707070 #707070 #fff"><svg style="left:2.4px;top:0.9px" width="3.2" height="1.7" viewBox="0 0 3.2 1.7"><path d="M0 1.7L1.6 0L3.2 1.7Z" fill="#000"/></svg></div>
<div class="a" style="left:1182.3px;top:304.8px;width:10.0px;height:5.4px;background:#d4d0c8;border:1px solid;border-color:#fff #707070 #707070 #fff"><svg style="left:2.4px;top:0.9px" width="3.2" height="1.7" viewBox="0 0 3.2 1.7"><path d="M0 0H3.2L1.6 1.7Z" fill="#000"/></svg></div>
<div class="sunkg" style="left:1078.0px;top:331.0px;width:69.6px;height:14.0px;"></div>
<div class="t" style="left:1080.0px;top:334px;font-size:8.2px;line-height:9px;letter-spacing:-0.020px;max-width:67px;overflow:hidden;">Start TC(мкс)</div>
<div class="sunk" style="left:1150.0px;top:331.0px;width:43.5px;height:14.0px;"></div>
<div class="t" style="left:1153.0px;top:334px;font-size:8.2px;line-height:9px;">300</div>
<div class="a" style="left:1182.3px;top:332.5px;width:10.0px;height:5.5px;background:#d4d0c8;border:1px solid;border-color:#fff #707070 #707070 #fff"><svg style="left:2.4px;top:0.9px" width="3.2" height="1.7" viewBox="0 0 3.2 1.7"><path d="M0 1.7L1.6 0L3.2 1.7Z" fill="#000"/></svg></div>
<div class="a" style="left:1182.3px;top:338.0px;width:10.0px;height:5.5px;background:#d4d0c8;border:1px solid;border-color:#fff #707070 #707070 #fff"><svg style="left:2.4px;top:0.9px" width="3.2" height="1.7" viewBox="0 0 3.2 1.7"><path d="M0 0H3.2L1.6 1.7Z" fill="#000"/></svg></div>
<div class="sunkg" style="left:1078.0px;top:348.7px;width:69.6px;height:13.8px;"></div>
<div class="t" style="left:1080.0px;top:352px;font-size:8.2px;line-height:9px;letter-spacing:-0.060px;max-width:67px;overflow:hidden;">Laser Off TC(мкс)</div>
<div class="sunk" style="left:1150.0px;top:348.7px;width:43.5px;height:13.8px;"></div>
<div class="t" style="left:1153.0px;top:352px;font-size:8.2px;line-height:9px;">100</div>
<div class="a" style="left:1182.3px;top:350.2px;width:10.0px;height:5.4px;background:#d4d0c8;border:1px solid;border-color:#fff #707070 #707070 #fff"><svg style="left:2.4px;top:0.9px" width="3.2" height="1.7" viewBox="0 0 3.2 1.7"><path d="M0 1.7L1.6 0L3.2 1.7Z" fill="#000"/></svg></div>
<div class="a" style="left:1182.3px;top:355.6px;width:10.0px;height:5.4px;background:#d4d0c8;border:1px solid;border-color:#fff #707070 #707070 #fff"><svg style="left:2.4px;top:0.9px" width="3.2" height="1.7" viewBox="0 0 3.2 1.7"><path d="M0 0H3.2L1.6 1.7Z" fill="#000"/></svg></div>
<div class="sunkg" style="left:1078.0px;top:365.8px;width:69.6px;height:13.9px;"></div>
<div class="t" style="left:1080.0px;top:369px;font-size:8.2px;line-height:9px;letter-spacing:0.043px;max-width:67px;overflow:hidden;">End TC(мкс)</div>
<div class="sunk" style="left:1150.0px;top:365.8px;width:43.5px;height:13.9px;"></div>
<div class="t" style="left:1153.0px;top:369px;font-size:8.2px;line-height:9px;">300</div>
<div class="a" style="left:1182.3px;top:367.3px;width:10.0px;height:5.4px;background:#d4d0c8;border:1px solid;border-color:#fff #707070 #707070 #fff"><svg style="left:2.4px;top:0.9px" width="3.2" height="1.7" viewBox="0 0 3.2 1.7"><path d="M0 1.7L1.6 0L3.2 1.7Z" fill="#000"/></svg></div>
<div class="a" style="left:1182.3px;top:372.8px;width:10.0px;height:5.4px;background:#d4d0c8;border:1px solid;border-color:#fff #707070 #707070 #fff"><svg style="left:2.4px;top:0.9px" width="3.2" height="1.7" viewBox="0 0 3.2 1.7"><path d="M0 0H3.2L1.6 1.7Z" fill="#000"/></svg></div>
<div class="sunkg" style="left:1078.0px;top:382.7px;width:69.6px;height:13.6px;"></div>
<div class="t" style="left:1080.0px;top:386px;font-size:8.2px;line-height:9px;letter-spacing:-0.072px;max-width:67px;overflow:hidden;">Polygon TC(мкс)</div>
<div class="sunk" style="left:1150.0px;top:382.7px;width:43.5px;height:13.6px;"></div>
<div class="t" style="left:1153.0px;top:386px;font-size:8.2px;line-height:9px;">100</div>
<div class="a" style="left:1182.3px;top:384.2px;width:10.0px;height:5.3px;background:#d4d0c8;border:1px solid;border-color:#fff #707070 #707070 #fff"><svg style="left:2.4px;top:0.8px" width="3.2" height="1.7" viewBox="0 0 3.2 1.7"><path d="M0 1.7L1.6 0L3.2 1.7Z" fill="#000"/></svg></div>
<div class="a" style="left:1182.3px;top:389.5px;width:10.0px;height:5.3px;background:#d4d0c8;border:1px solid;border-color:#fff #707070 #707070 #fff"><svg style="left:2.4px;top:0.8px" width="3.2" height="1.7" viewBox="0 0 3.2 1.7"><path d="M0 0H3.2L1.6 1.7Z" fill="#000"/></svg></div>
<div class="a" style="left:1165.8px;top:248.5px;width:.8px;height:8.5px;background:#000"></div>
<div class="btn" style="left:1114.0px;top:420.7px;width:24.0px;height:17.0px;"></div>
<svg style="left:1116px;top:425px" width="20" height="9" viewBox="0 0 20 9"><ellipse cx="3.3" cy="4.5" rx="2.9" ry="3.6" fill="none" stroke="#e00000" stroke-width=".9"/><ellipse cx="7.7" cy="4.5" rx="2.9" ry="3.6" fill="none" stroke="#e00000" stroke-width=".9"/><ellipse cx="12.100000000000001" cy="4.5" rx="2.9" ry="3.6" fill="none" stroke="#e00000" stroke-width=".9"/><ellipse cx="16.5" cy="4.5" rx="2.9" ry="3.6" fill="none" stroke="#e00000" stroke-width=".9"/></svg>
<div class="btn" style="left:1140.8px;top:420.7px;width:53.4px;height:17.0px;"></div>
<div class="t" style="left:1144.0px;top:425px;font-size:8.2px;line-height:9px;letter-spacing:-0.177px;">Доп. парам...</div>
<div class="btn" style="left:1076.5px;top:446.0px;width:46.3px;height:14.8px;"></div>
<div class="t" style="left:1083.0px;top:450px;font-size:8.2px;line-height:9px;letter-spacing:-0.074px;">Имя пар.</div>
<div class="sunkg" style="left:1123.5px;top:446.5px;width:74.0px;height:14.0px;"></div>
<div class="t" style="left:1125.0px;top:450px;font-size:8.2px;line-height:9px;letter-spacing:-0.140px;">Default</div>
<div class="btn" style="left:1076.5px;top:463.3px;width:121.0px;height:17.5px;"></div>
<div class="t" style="left:1090.5px;top:468px;font-size:8.2px;line-height:9px;letter-spacing:0.064px;">Библиотека параметров</div>
<div class="btn" style="left:1076.5px;top:482.5px;width:121.0px;height:18.3px;"></div>
<div class="t" style="left:1093.5px;top:488px;font-size:8.2px;line-height:9px;letter-spacing:-0.048px;">Сделать по умолчанию</div>
<div class="a" style="left:0;top:627px;width:1200px;height:1px;background:#808080"></div>
<div class="a" style="left:0;top:628px;width:1200px;height:1px;background:#fff"></div>
<div class="t" style="left:1.0px;top:632px;font-size:8.2px;line-height:9px;letter-spacing:0.082px;">Выделено объектов: 1объекта выделено Объект:Текст Размер: X23.090 Y6.092</div>
<div class="sunkg" style="left:990.0px;top:630.6px;width:79.0px;height:10.8px;"></div>
<div class="sunkg" style="left:1071.0px;top:630.6px;width:41.5px;height:10.8px;"></div>
<div class="sunkg" style="left:1114.4px;top:630.6px;width:41.6px;height:10.8px;"></div>
<div class="sunkg" style="left:1158.0px;top:630.6px;width:43.0px;height:10.8px;"></div>
<div class="t" style="left:994.0px;top:632px;font-size:8.2px;line-height:9px;letter-spacing:0.153px;">2.436,8.284</div>
<div class="t" style="left:1073.0px;top:632px;font-size:8.2px;line-height:9px;letter-spacing:-0.058px;width:39px;overflow:hidden;">Сетка:Вык</div>
<div class="t" style="left:1116.0px;top:632px;font-size:8.2px;line-height:9px;letter-spacing:-0.042px;width:39.5px;overflow:hidden;">Вспом.лин</div>
<div class="t" style="left:1160.0px;top:632px;font-size:8.2px;line-height:9px;letter-spacing:-0.105px;width:40px;overflow:hidden;">Объект:Вь</div>
<div class="a" style="left:0;top:642px;width:1200px;height:33px;background:#d4d0c8"></div>
<div class="a" style="left:0;top:642.5px;width:1200px;height:1px;background:#fff"></div>
<div class="btn" style="left:2.0px;top:645.0px;width:37.5px;height:27.5px;"></div>
<svg style="left:4px;top:653px" width="11" height="11" viewBox="0 0 11 11"><path d="M0.5 2.2C2 1 3.5 1 5 2V5.2C3.5 4.3 2 4.3 0.5 5.3Z" fill="#e8501c"/><path d="M5.7 2C7.2 3 8.7 3 10.3 2V5.2C8.7 6.2 7.2 6.2 5.7 5.2Z" fill="#6cb82c"/><path d="M0.5 6C2 5 3.5 5 5 6V9.2C3.5 8.3 2 8.3 0.5 9.3Z" fill="#2c7ce0"/><path d="M5.7 6C7.2 7 8.7 7 10.3 6V9.2C8.7 10.2 7.2 10.2 5.7 9.2Z" fill="#f4c020"/></svg>
<div class="t" style="left:16.3px;top:654px;font-size:8.8px;line-height:10px;letter-spacing:0.225px;font-weight:bold;">Пуск</div>
<div class="a" style="left:48.0px;top:645.0px;width:34.5px;height:28.3px;background:#0a246a;border:1px solid;border-color:#000 #e8e6e0 #e8e6e0 #000;box-shadow:0 0 0 .5px #808080"></div>
<svg style="left:50.5px;top:648.0px" width="29" height="23" viewBox="0 1.5 24 20.5"><path d="M1 4.5Q1 3 2.5 3H9L10.5 5H21.5Q23 5 23 6.5V19.5Q23 21 21.5 21H2.5Q1 21 1 19.5Z" fill="#f3d77a" stroke="#c9a63a" stroke-width=".8"/><rect x="3" y="6" width="18" height="5" fill="#fff3c4"/><rect x="4" y="6.8" width="2" height="1.6" fill="#2a9a3a"/><rect x="9.5" y="6.8" width="2" height="1.6" fill="#e03030"/><rect x="15" y="6.8" width="2" height="1.6" fill="#2a6ae0"/><path d="M1 10H23V19.5Q23 21 21.5 21H2.5Q1 21 1 19.5Z" fill="#f7e08c" stroke="#c9a63a" stroke-width=".6"/><path d="M5 21V15.5Q5 14 6.5 14H17.5Q19 14 19 15.5V21Z" fill="#6fb7ea" stroke="#3a86c4" stroke-width=".7"/><rect x="7.5" y="17.5" width="9" height="3.5" fill="#bfe0f8"/></svg>
<svg style="left:91.0px;top:650.0px" width="20" height="20" viewBox="0 0 20 20"><rect x="2" y="2" width="16" height="16" fill="#9fc8ee" stroke="#6a9ad0" stroke-width=".8"/><rect x="10" y="2" width="8" height="16" fill="#c4e0f8"/><circle cx="9" cy="10.5" r="6.3" fill="#f08020" stroke="#fff" stroke-width="1.2"/><path d="M7 7L13 10.5L7 14Z" fill="#fff"/></svg>
<svg style="left:127.0px;top:646.5px" width="26" height="26" viewBox="0 0 24 24"><path d="M20.5 14.5C19.5 18 16.5 20.3 12.5 20.3C7.5 20.3 4 16.8 4 12.3C4 7.8 7.5 4.5 12.3 4.5C17.3 4.5 20.8 8 20.6 13H8.5" fill="none" stroke="#2f8fe0" stroke-width="3.6"/><path d="M22 3.5C19 1.5 11.5 4.5 6 11C1.5 16.5 0.5 21 3 22.5C5 23.5 8.5 22 11 20" fill="none" stroke="#f0b820" stroke-width="1.5"/></svg>
<svg style="left:165.0px;top:648.0px" width="24" height="24" viewBox="0 0 24 24"><circle cx="12" cy="12" r="11.3" fill="#3aa81c" stroke="#2a7a14" stroke-width=".8"/><ellipse cx="12" cy="7" rx="9" ry="5.5" fill="#8ed86a" opacity=".55"/><rect x="8" y="5.5" width="6.5" height="12.5" rx="1" fill="#c8d8c0" stroke="#5a7a4a" stroke-width=".7"/><rect x="9" y="7" width="4.5" height="4" fill="#8aa080"/><circle cx="15.5" cy="15.5" r="3" fill="#e8f4e0" stroke="#4a7a3a" stroke-width=".6"/></svg>
<svg style="left:201.0px;top:647.0px" width="26" height="24" viewBox="0 0 26 24"><path d="M24.5 0.5C23.5 5 20 9.5 15.5 12.5L19 14L12 16.5L13 19.5L8 21L5 23.5L6.5 19.5L3 18.5L8 14C11 9.5 18 3.5 24.5 0.5Z" fill="#3c3c3c"/><path d="M3.5 13.5L8 15M4 20.5L12 18" stroke="#3c3c3c" stroke-width="1.4"/><text x="1.5" y="11.5" font-size="6" font-weight="bold" fill="#333" font-family="Liberation Serif,serif">EBI</text><text x="12.5" y="22" font-size="6.5" font-weight="bold" fill="#333" font-family="Liberation Serif,serif">3D</text></svg>
<svg style="left:240.0px;top:646.7px" width="24" height="24" viewBox="0 0 24 24"><path d="M12 0.5V3M3 4L5.5 6M21 4L18.5 6M0.8 10.5H3.5M23.2 10.5H20.5M3.5 17.5L6 16M20.5 17.5L18 16" stroke="#555" stroke-width=".9"/><path d="M12 3.5C16.3 3.5 18.6 6.5 18.6 9.6C18.6 12.8 15.6 14 15.2 17.5H8.8C8.4 14 5.4 12.8 5.4 9.6C5.4 6.5 7.7 3.5 12 3.5Z" fill="#f2ea62" stroke="#4a4a3a" stroke-width=".9"/><path d="M10.6 17V10.5c0-1.6 2.8-1.6 2.8 0V17" fill="none" stroke="#8a7a20" stroke-width=".7"/><rect x="8.8" y="17.5" width="6.4" height="5.5" rx="1.3" fill="#2a2a2a"/><path d="M9 19.4H15M9 21.2H15" stroke="#777" stroke-width=".5"/></svg>
<svg style="left:277.5px;top:647.0px" width="24" height="24" viewBox="0 0 24 24"><defs><linearGradient id="gml" x1="0.2" y1="0" x2="1" y2="0.9"><stop offset="0" stop-color="#f2f2f2"/><stop offset=".55" stop-color="#c4c4c4"/><stop offset="1" stop-color="#6a6a6a"/></linearGradient></defs><path d="M1 0.8H23.2V23.2Z" fill="url(#gml)"/><path d="M1 0.8L23.2 23.2" stroke="#e01838" stroke-width="1.1"/><text x="8.5" y="6" font-size="5" fill="#777" font-family="Liberation Sans,sans-serif">Mesh</text></svg>
<div class="btn" style="left:309.0px;top:645.0px;width:36.5px;height:28.0px;"></div>
<svg style="left:315.0px;top:647.5px" width="24" height="24" viewBox="0 0 24 24"><circle cx="12" cy="12" r="11.5" fill="#2fa8d8"/><text x="2" y="17" font-size="10" fill="#fff" font-family="Liberation Sans,sans-serif">v.</text><circle cx="16" cy="7.2" r="3.2" fill="none" stroke="#fff" stroke-width="1.1"/><circle cx="16" cy="14.3" r="4" fill="none" stroke="#fff" stroke-width="1.1"/></svg>
<svg style="left:354.5px;top:648.0px" width="20" height="24" viewBox="0 0 20 24"><path d="M5.5 1L18.5 7.5L15.5 22.5L2 18Z" fill="#e8281c"/><path d="M5.5 1L10 5L4.5 15L2 18Z" fill="#b81810"/><path d="M7 15.5L14 12L12.5 17.5Z" fill="#fff"/><path d="M9 4L17 8" stroke="#ff7a6a" stroke-width="1"/></svg>
<svg style="left:390.0px;top:647.5px" width="24" height="24" viewBox="0 0 24 24"><rect x="0.5" y="0.5" width="23" height="23" fill="#f4f4f4"/><circle cx="13" cy="4.5" r="2" fill="#222"/><path d="M5 9C10 5.5 16 6 20 9L12 14C16 14.5 19 17 20 21.5" fill="none" stroke="#222" stroke-width="1.8"/><path d="M12 14C8 15 5 17 3 20C7 21.5 12 20 14 17" fill="none" stroke="#222" stroke-width="1.3"/></svg>
<svg style="left:430.0px;top:649.0px" width="18" height="22" viewBox="0 0 18 22"><rect x="0.7" y="0.7" width="16.6" height="20.6" rx="1.5" fill="#bfe0f7" stroke="#5a9ad0" stroke-width="1"/><rect x="2.7" y="2.7" width="12.6" height="5.5" fill="#e8f5ff" stroke="#6aa6d8" stroke-width=".6"/><rect x="10.5" y="3.8" width="3.5" height="3.2" fill="#f0a840"/><rect x="2.8" y="10.2" width="2.4" height="2.5" fill="#6aa6dc"/><rect x="6.1" y="10.2" width="2.4" height="2.5" fill="#6aa6dc"/><rect x="9.399999999999999" y="10.2" width="2.4" height="2.5" fill="#6aa6dc"/><rect x="12.7" y="10.2" width="2.4" height="2.5" fill="#6aa6dc"/><rect x="2.8" y="13.799999999999999" width="2.4" height="2.5" fill="#6aa6dc"/><rect x="6.1" y="13.799999999999999" width="2.4" height="2.5" fill="#6aa6dc"/><rect x="9.399999999999999" y="13.799999999999999" width="2.4" height="2.5" fill="#6aa6dc"/><rect x="12.7" y="13.799999999999999" width="2.4" height="2.5" fill="#6aa6dc"/><rect x="2.8" y="17.4" width="2.4" height="2.5" fill="#6aa6dc"/><rect x="6.1" y="17.4" width="2.4" height="2.5" fill="#6aa6dc"/><rect x="9.399999999999999" y="17.4" width="2.4" height="2.5" fill="#6aa6dc"/><rect x="12.7" y="17.4" width="2.4" height="2.5" fill="#6aa6dc"/></svg>
<div class="btn" style="left:459.0px;top:645.0px;width:32.0px;height:28.0px;"></div>
<div class="a" style="left:492.5px;top:645px;width:2px;height:28px;border-left:1px solid #404040;border-right:1px solid #808080"></div>
<svg style="left:463.5px;top:648.0px" width="24" height="24" viewBox="0 0 24 24"><circle cx="12" cy="12" r="11.3" fill="#f6f6f6" stroke="#ddd" stroke-width=".6"/><path d="M6 6L12 13.3L18 6M12 13.3V19.5" fill="none" stroke="#e01020" stroke-width="2"/></svg>
<svg style="left:501.0px;top:648.5px" width="26" height="22" viewBox="0 0 26 22"><path d="M2 12.5L13 4.5M3 17L10 12M6 8.5H15" stroke="#ee7a10" stroke-width="2.6" stroke-linecap="round"/><ellipse cx="16" cy="13" rx="8.3" ry="7" fill="#ee7a10"/><circle cx="16" cy="13" r="4.6" fill="#fff"/><circle cx="16" cy="13" r="2.6" fill="#1a4a9a"/></svg>
<svg style="left:540.0px;top:648.0px" width="24" height="24" viewBox="0 0 24 24"><circle cx="12" cy="12" r="11.3" fill="#e03a2c"/><path d="M12 12L2.2 6.4A11.3 11.3 0 0 0 12 23.3Z" fill="#2f9e4a"/><path d="M12 12V23.3A11.3 11.3 0 0 0 21.8 6.4Z" fill="#f7cc2a"/><path d="M12 12L2.2 6.4A11.3 11.3 0 0 1 21.8 6.4Z" fill="#e03a2c"/><circle cx="12" cy="12" r="5.2" fill="#fff"/><circle cx="12" cy="12" r="4" fill="#4a8af4"/></svg>
<svg style="left:577.5px;top:647.5px" width="24" height="23" viewBox="0 0 24 23"><rect x="0" y="0" width="24" height="23" fill="#2a8ac0"/><rect x="0" y="0" width="24" height="10" fill="#3aa0d8" opacity=".7"/><path d="M3.5 6H20.5L11 18.5H6.5L15 8.5H3.5Z" fill="#0a0a0a"/></svg>
<svg style="left:615.0px;top:647.0px" width="24" height="24" viewBox="0 0 24 24"><defs><linearGradient id="gmx" x1="0" y1="1" x2="1" y2="0"><stop offset="0" stop-color="#18a8a8"/><stop offset=".55" stop-color="#7ad4d2"/><stop offset="1" stop-color="#f4fcfc"/></linearGradient></defs><rect x="0" y="0" width="24" height="24" fill="url(#gmx)"/><path d="M7 2.5H14.5L19 10.5L14.5 18.5H6.5L9.5 15L7 12.8L10 10.5L7 8.2L9.5 6Z" fill="#0e9c9c"/><path d="M7 2.5H14.5L16.5 6H9.5Z" fill="#38d4d0"/><path d="M14.5 2.5L19 10.5H12L16.5 6Z" fill="#0a8484"/><path d="M10 10.5H19L14.5 18.5L12.5 14.5Z" fill="#19b4b2"/><rect x="12.5" y="19" width="11.5" height="5" fill="#e8f4f4"/><text x="13.3" y="23.3" font-size="4.6" font-weight="bold" fill="#444" font-family="Liberation Sans,sans-serif">MAX</text></svg>
<svg style="left:652.5px;top:647.0px" width="24" height="24" viewBox="0 0 24 24"><defs><linearGradient id="gmd" x1="0" y1="0.6" x2="1" y2="0.2"><stop offset="0" stop-color="#e85a34"/><stop offset=".6" stop-color="#f2a88e"/><stop offset="1" stop-color="#fbe8e0"/></linearGradient></defs><rect x="0" y="0" width="24" height="24" fill="url(#gmd)"/><path d="M3.5 15.5L8 2.5L12 8L16 2.5L20.5 15.5L17.5 17.5L12 10.5L6.5 17.5Z" fill="#d04a28" opacity=".85"/><path d="M3.5 15.5L12 5.5L20.5 15.5L17.5 17.5L16 14.5H8L6.5 17.5Z" fill="#9a200c"/><path d="M8 14.5L12 8.5L16 14.5Z" fill="#c03a1c"/><rect x="0" y="18.5" width="24" height="5.5" fill="#f0623a"/><text x="7" y="23.3" font-size="5" font-weight="bold" fill="#fff" font-family="Liberation Sans,sans-serif">MUD</text></svg>
<svg style="left:690.0px;top:647.0px" width="24" height="24" viewBox="0 0 24 24"><defs><linearGradient id="gmy" x1="0" y1="0" x2="0" y2="1"><stop offset="0" stop-color="#f6fafa"/><stop offset=".6" stop-color="#d4ecec"/><stop offset="1" stop-color="#5ec0c0"/></linearGradient></defs><rect x="0" y="0" width="24" height="24" fill="url(#gmy)"/><path d="M3 17.5V7L12 2L21 7V17.5L17 17.5V12L12 17L7 12V17.5Z" fill="#12a4a4"/><path d="M12 2L21 7L17 12L12 6.5Z" fill="#0a8282"/><path d="M12 2L3 7L7 12L12 6.5Z" fill="#0c9090"/><path d="M3 7V17.5L7 17.5V12Z" fill="#2ad0d0"/><path d="M7 12L12 6.5L17 12L12 17Z" fill="#0a7878"/><path d="M9.5 12.5L12 17L14.5 12.5L12 10Z" fill="#26c4c4"/><rect x="9.5" y="19" width="14.5" height="5" fill="#e8f4f4" opacity=".9"/><text x="10" y="23.3" font-size="4.5" font-weight="bold" fill="#444" font-family="Liberation Sans,sans-serif">MAYA</text></svg>
<svg style="left:729.0px;top:648.0px" width="21" height="20" viewBox="0 0 21 20"><rect x="0.8" y="0.8" width="19.4" height="18.4" fill="#0a1a3c" stroke="#2aa8f0" stroke-width="1.6"/><text x="3.6" y="14.5" font-size="11.5" font-weight="bold" fill="#2aa8f0" font-family="Liberation Sans,sans-serif">Ps</text></svg>
<svg style="left:765.0px;top:647.5px" width="24" height="24" viewBox="0 0 24 24"><path d="M1.5 6L12 1L22.5 6V17.5L12 22.5L1.5 17.5Z" fill="#d01818"/><path d="M1.5 6L12 10.5L22.5 6L12 1Z" fill="#f0584a"/><path d="M12 10.5V22.5L22.5 17.5V6Z" fill="#b01212"/><text x="1.8" y="15.5" font-size="11.5" font-weight="bold" fill="#fff" font-family="Liberation Sans,sans-serif" textLength="20" lengthAdjust="spacingAndGlyphs">SW</text><text x="7" y="23.6" font-size="7.6" font-weight="bold" fill="#fff" stroke="#333" stroke-width=".5" paint-order="stroke" font-family="Liberation Sans,sans-serif">2015</text></svg>
<svg style="left:802.0px;top:647.0px" width="24" height="26" viewBox="0 0 24 26"><path d="M9.5 14C8 9 6.5 6 3.5 4.5" fill="none" stroke="#1a3ad0" stroke-width="1.6"/><path d="M0.5 4.5L5.5 1L5.5 8Z" fill="#1a3ad0"/><path d="M12 14C12 9 12.5 6 14.5 3" fill="none" stroke="#d01818" stroke-width="1.4"/><rect x="12.5" y="1" width="4" height="4" fill="#d01818"/><path d="M14 14C15.5 9 17.5 6.5 20 4.5" fill="none" stroke="#18a030" stroke-width="1.5"/><path d="M23 1.5L17.5 3L21.5 7.5Z" fill="#18a030"/><ellipse cx="12" cy="14.8" rx="7" ry="2.3" fill="#444" stroke="#111" stroke-width=".8"/><path d="M6 15.5L7.5 25H16.5L18 15.5Z" fill="#1a1a1a"/><ellipse cx="12" cy="22.8" rx="8" ry="2.4" fill="#111"/><rect x="10" y="18.5" width="3.3" height="3.8" fill="#eee"/></svg>
<div class="btn" style="left:834.5px;top:645.0px;width:34.5px;height:28.0px;"></div>
<svg style="left:838.8px;top:647.0px" width="26" height="26" viewBox="0 0 26 26"><circle cx="13" cy="13" r="9.8" fill="#10a6ea"/><circle cx="6.5" cy="6.5" r="5.6" fill="#10a6ea"/><circle cx="19.5" cy="19.5" r="5.6" fill="#10a6ea"/><text x="6.7" y="20" font-size="19" font-weight="bold" fill="#fff" font-family="Liberation Sans,sans-serif">S</text></svg>
<div class="btn" style="left:871.0px;top:645.0px;width:36.0px;height:28.0px;"></div>
<svg style="left:876.0px;top:647.0px" width="26" height="26" viewBox="0 0 26 26"><circle cx="13" cy="13" r="12.3" fill="#4aa82c" stroke="#2f7a1a" stroke-width=".8"/><ellipse cx="13" cy="7.5" rx="10" ry="6" fill="#8ed86a" opacity=".45"/><path d="M8.5 7.5V15.5Q8.5 18 11 18H13Q15.5 18 15.5 15.5V7.5M15.5 16.5Q16.5 18.5 19 17.5M8.5 15V23" fill="none" stroke="#fff" stroke-width="2.6"/></svg>
<div class="a" style="left:909.8px;top:645.0px;width:34.2px;height:28.0px;background:#fff;border:1px solid;border-color:#404040 #fff #fff #404040;box-shadow:inset 1px 1px 0 #808080"></div>
<svg style="left:911.5px;top:647px" width="31" height="25" viewBox="0 0 31 25"><path d="M0 3.5H31M0 7H31M0 10.5H31M0 14H31M0 17.5H31M0 21H31M3.5 0V25M7 0V25M10.5 0V25M14 0V25M17.5 0V25M21 0V25M24.5 0V25M28 0V25" stroke="#f0c8d8" stroke-width=".5"/></svg>
<div class="t" style="left:917.5px;top:645px;font-size:21px;line-height:23px;color:#e02838;font-weight:bold;transform:scaleX(1.35);transform-origin:0 0;text-shadow:.6px .6px 0 #666;">2</div>
<div class="t" style="left:914.5px;top:664px;font-size:7.3px;line-height:9px;letter-spacing:0.171px;color:#2a3a8a;font-weight:bold;">EZCAD</div>
<div class="t" style="left:1003.0px;top:653px;font-size:8.8px;line-height:10px;letter-spacing:-0.355px;">RU</div>
<div class="vl" style="left:1019px;top:648px;height:22px;border-left-color:#a8a49c"></div>
<svg style="left:1022.5px;top:651.8px" width="13" height="13" viewBox="0 0 13 13"><circle cx="6.5" cy="6.5" r="6" fill="#1a2ab0" stroke="#8a9ad8" stroke-width=".9"/><ellipse cx="6.5" cy="4.2" rx="4" ry="2.4" fill="#6a8af0" opacity=".6"/><text x="4.1" y="9.8" font-size="9" font-weight="bold" fill="#fff" font-family="Liberation Sans,sans-serif">?</text></svg>
<div class="vl" style="left:1039px;top:648px;height:22px;border-left-color:#a8a49c"></div>
<svg style="left:1043.5px;top:650px" width="6" height="6" viewBox="0 0 6 6"><rect x="1.8" y="0.5" width="3.6" height="3" fill="none" stroke="#222" stroke-width=".8"/><rect x="0.5" y="2" width="3.6" height="3" fill="#d4d0c8" stroke="#222" stroke-width=".8"/></svg>
<svg style="left:1044px;top:659.5px" width="5" height="3" viewBox="0 0 5 3"><path d="M0 0H5L2.5 3Z" fill="#000"/></svg>
<div class="sunkg" style="left:1053.6px;top:645.0px;width:147.4px;height:28.3px;"></div>
<svg style="left:1057.5px;top:654.5px" width="6" height="8" viewBox="0 0 6 8"><path d="M0.7 3.5L3 1L5.3 3.5M0.7 7L3 4.5L5.3 7" fill="none" stroke="#000" stroke-width="1.1"/></svg>
<svg style="left:1069.0px;top:652.5px" width="14" height="14" viewBox="0 0 14 14"><path d="M2 1V13.5" stroke="#444" stroke-width="1.1"/><path d="M2.5 1.5H10.5L8.5 4.2L10.5 7H2.5Z" fill="#fff" stroke="#444" stroke-width=".8"/><path d="M9 6.5L13.5 13.5H4.5Z" fill="#f4c820" stroke="#9a7a10" stroke-width=".5"/><path d="M9 9V11.3M9 12v.8" stroke="#222" stroke-width=".9"/></svg>
<svg style="left:1087.0px;top:651.5px" width="14" height="16" viewBox="0 0 14 16"><rect x="1" y="2" width="7.5" height="12.5" rx="1" fill="#eee" stroke="#555" stroke-width=".9"/><rect x="3" y="0.6" width="3.5" height="1.6" fill="#777"/><path d="M6.5 5.5V3.5M10.5 5.5V3.5" stroke="#444" stroke-width="1"/><path d="M5 5.5H12V8.5Q12 11 8.5 11Q5 11 5 8.5Z" fill="#fff" stroke="#444" stroke-width=".9"/><path d="M8.5 11V13Q8.5 15 11 15" fill="none" stroke="#444" stroke-width="1"/></svg>
<svg style="left:1105.5px;top:654.5px" width="13" height="11" viewBox="0 0 13 11"><rect x="0.5" y="8.0" width="1.9" height="2.0" fill="#dcdcdc" stroke="#808080" stroke-width=".6"/><rect x="3.0" y="5.9" width="1.9" height="4.1" fill="#dcdcdc" stroke="#808080" stroke-width=".6"/><rect x="5.5" y="3.8" width="1.9" height="6.2" fill="#dcdcdc" stroke="#808080" stroke-width=".6"/><rect x="8.0" y="1.6999999999999993" width="1.9" height="8.3" fill="#dcdcdc" stroke="#808080" stroke-width=".6"/><rect x="10.5" y="-0.40000000000000036" width="1.9" height="10.4" fill="#dcdcdc" stroke="#808080" stroke-width=".6"/></svg>
<svg style="left:1122.5px;top:653.0px" width="15" height="13" viewBox="0 0 15 13"><path d="M1 4.5H3.5L7 1.5V11.5L3.5 8.5H1Z" fill="#e0e0e0" stroke="#707070" stroke-width=".8"/><path d="M9 4Q10.5 6.5 9 9M11 2.5Q13.5 6.5 11 10.5M12.8 1.2Q16 6.5 12.8 11.8" fill="none" stroke="#909090" stroke-width=".8"/></svg>
<div class="t" style="left:1153.0px;top:648px;font-size:8.5px;line-height:10px;letter-spacing:-0.154px;">23:00</div>
<div class="t" style="left:1147.0px;top:660px;font-size:8.5px;line-height:10px;letter-spacing:-0.073px;">17/10/17</div>
<svg style="left:1185.5px;top:654.5px" width="13" height="10" viewBox="0 0 13 10"><rect x="0.4" y="0.4" width="12.2" height="9.2" fill="#3a7ad8" stroke="#8ab0e8" stroke-width=".8"/><rect x="0.8" y="0.8" width="11.4" height="3.5" fill="#6aa8f0" opacity=".7"/><rect x="0.8" y="7.6" width="11.4" height="1.6" fill="#1a4a9a"/></svg>
<svg style="left:0;top:0" width="1200" height="675" viewBox="0 0 1200 675"><path d="M1041.4 314.9L1042.5 316.9L1137.4 267.4L1135 263.2Z" fill="#e8453c" stroke="#e8453c" stroke-width=".7" stroke-linejoin="round"/><path d="M1154 256.4L1131.7 257.2L1140.8 274Z" fill="#e8453c"/></svg>
</body></html>
